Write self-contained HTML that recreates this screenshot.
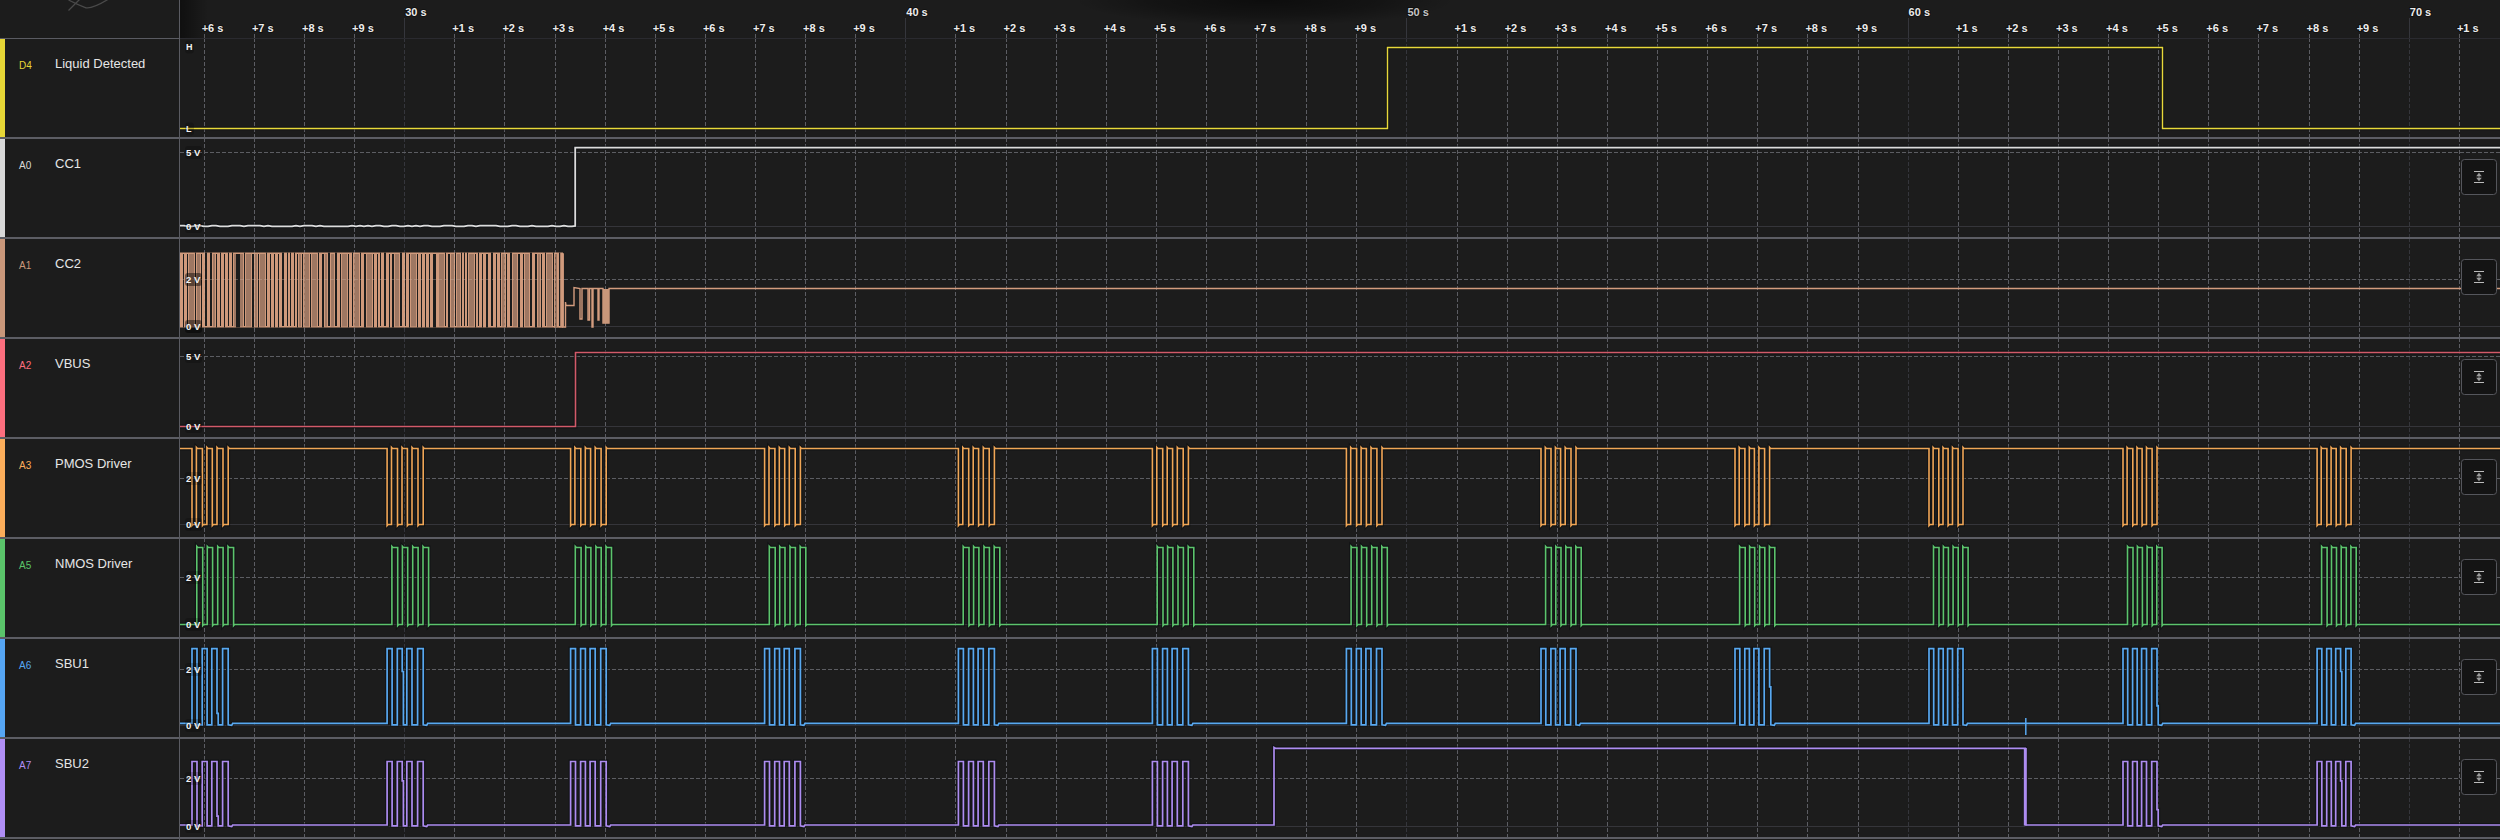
<!DOCTYPE html>
<html><head><meta charset="utf-8"><title>Logic</title>
<style>
html,body{margin:0;padding:0;background:#1c1c1c;width:2500px;height:840px;overflow:hidden}
svg{display:block}
text{font-family:"Liberation Sans",sans-serif}
</style></head><body>
<svg width="2500" height="840" viewBox="0 0 2500 840">
<defs>
<linearGradient id="lsh" x1="0" x2="1" y1="0" y2="0">
<stop offset="0" stop-color="#000" stop-opacity="0.45"/>
<stop offset="1" stop-color="#000" stop-opacity="0"/>
</linearGradient>
<radialGradient id="tsh" cx="0.5" cy="0.5" r="0.5" gradientUnits="objectBoundingBox">
<stop offset="0" stop-color="#000" stop-opacity="0.55"/>
<stop offset="0.6" stop-color="#000" stop-opacity="0.3"/>
<stop offset="1" stop-color="#000" stop-opacity="0"/>
</radialGradient>
<filter id="blur1" x="-20%" y="-20%" width="140%" height="140%"><feGaussianBlur stdDeviation="0.8"/></filter>
</defs>
<rect x="0" y="0" width="2500" height="840" fill="#1c1c1c"/>

<line x1="204.5" y1="38" x2="204.5" y2="138" stroke="#5c5d63" stroke-width="1" stroke-dasharray="4 2"/>
<line x1="204.5" y1="138" x2="204.5" y2="238" stroke="#5c5d63" stroke-width="1" stroke-dasharray="4 2"/>
<line x1="204.5" y1="238" x2="204.5" y2="338" stroke="#5c5d63" stroke-width="1" stroke-dasharray="4 2"/>
<line x1="204.5" y1="338" x2="204.5" y2="438" stroke="#5c5d63" stroke-width="1" stroke-dasharray="4 2"/>
<line x1="204.5" y1="438" x2="204.5" y2="538" stroke="#5c5d63" stroke-width="1" stroke-dasharray="4 2"/>
<line x1="204.5" y1="538" x2="204.5" y2="638" stroke="#5c5d63" stroke-width="1" stroke-dasharray="4 2"/>
<line x1="204.5" y1="638" x2="204.5" y2="738" stroke="#5c5d63" stroke-width="1" stroke-dasharray="4 2"/>
<line x1="204.5" y1="738" x2="204.5" y2="838" stroke="#5c5d63" stroke-width="1" stroke-dasharray="4 2"/>
<line x1="204.5" y1="34" x2="204.5" y2="38" stroke="#5c5d63" stroke-width="1"/>
<line x1="254.5" y1="38" x2="254.5" y2="138" stroke="#5c5d63" stroke-width="1" stroke-dasharray="4 2"/>
<line x1="254.5" y1="138" x2="254.5" y2="238" stroke="#5c5d63" stroke-width="1" stroke-dasharray="4 2"/>
<line x1="254.5" y1="238" x2="254.5" y2="338" stroke="#5c5d63" stroke-width="1" stroke-dasharray="4 2"/>
<line x1="254.5" y1="338" x2="254.5" y2="438" stroke="#5c5d63" stroke-width="1" stroke-dasharray="4 2"/>
<line x1="254.5" y1="438" x2="254.5" y2="538" stroke="#5c5d63" stroke-width="1" stroke-dasharray="4 2"/>
<line x1="254.5" y1="538" x2="254.5" y2="638" stroke="#5c5d63" stroke-width="1" stroke-dasharray="4 2"/>
<line x1="254.5" y1="638" x2="254.5" y2="738" stroke="#5c5d63" stroke-width="1" stroke-dasharray="4 2"/>
<line x1="254.5" y1="738" x2="254.5" y2="838" stroke="#5c5d63" stroke-width="1" stroke-dasharray="4 2"/>
<line x1="254.5" y1="34" x2="254.5" y2="38" stroke="#5c5d63" stroke-width="1"/>
<line x1="304.5" y1="38" x2="304.5" y2="138" stroke="#5c5d63" stroke-width="1" stroke-dasharray="4 2"/>
<line x1="304.5" y1="138" x2="304.5" y2="238" stroke="#5c5d63" stroke-width="1" stroke-dasharray="4 2"/>
<line x1="304.5" y1="238" x2="304.5" y2="338" stroke="#5c5d63" stroke-width="1" stroke-dasharray="4 2"/>
<line x1="304.5" y1="338" x2="304.5" y2="438" stroke="#5c5d63" stroke-width="1" stroke-dasharray="4 2"/>
<line x1="304.5" y1="438" x2="304.5" y2="538" stroke="#5c5d63" stroke-width="1" stroke-dasharray="4 2"/>
<line x1="304.5" y1="538" x2="304.5" y2="638" stroke="#5c5d63" stroke-width="1" stroke-dasharray="4 2"/>
<line x1="304.5" y1="638" x2="304.5" y2="738" stroke="#5c5d63" stroke-width="1" stroke-dasharray="4 2"/>
<line x1="304.5" y1="738" x2="304.5" y2="838" stroke="#5c5d63" stroke-width="1" stroke-dasharray="4 2"/>
<line x1="304.5" y1="34" x2="304.5" y2="38" stroke="#5c5d63" stroke-width="1"/>
<line x1="354.5" y1="38" x2="354.5" y2="138" stroke="#5c5d63" stroke-width="1" stroke-dasharray="4 2"/>
<line x1="354.5" y1="138" x2="354.5" y2="238" stroke="#5c5d63" stroke-width="1" stroke-dasharray="4 2"/>
<line x1="354.5" y1="238" x2="354.5" y2="338" stroke="#5c5d63" stroke-width="1" stroke-dasharray="4 2"/>
<line x1="354.5" y1="338" x2="354.5" y2="438" stroke="#5c5d63" stroke-width="1" stroke-dasharray="4 2"/>
<line x1="354.5" y1="438" x2="354.5" y2="538" stroke="#5c5d63" stroke-width="1" stroke-dasharray="4 2"/>
<line x1="354.5" y1="538" x2="354.5" y2="638" stroke="#5c5d63" stroke-width="1" stroke-dasharray="4 2"/>
<line x1="354.5" y1="638" x2="354.5" y2="738" stroke="#5c5d63" stroke-width="1" stroke-dasharray="4 2"/>
<line x1="354.5" y1="738" x2="354.5" y2="838" stroke="#5c5d63" stroke-width="1" stroke-dasharray="4 2"/>
<line x1="354.5" y1="34" x2="354.5" y2="38" stroke="#5c5d63" stroke-width="1"/>
<line x1="404.5" y1="38" x2="404.5" y2="138" stroke="#35363c" stroke-width="1" stroke-dasharray="4 2"/>
<line x1="404.5" y1="138" x2="404.5" y2="238" stroke="#35363c" stroke-width="1" stroke-dasharray="4 2"/>
<line x1="404.5" y1="238" x2="404.5" y2="338" stroke="#35363c" stroke-width="1" stroke-dasharray="4 2"/>
<line x1="404.5" y1="338" x2="404.5" y2="438" stroke="#35363c" stroke-width="1" stroke-dasharray="4 2"/>
<line x1="404.5" y1="438" x2="404.5" y2="538" stroke="#35363c" stroke-width="1" stroke-dasharray="4 2"/>
<line x1="404.5" y1="538" x2="404.5" y2="638" stroke="#35363c" stroke-width="1" stroke-dasharray="4 2"/>
<line x1="404.5" y1="638" x2="404.5" y2="738" stroke="#35363c" stroke-width="1" stroke-dasharray="4 2"/>
<line x1="404.5" y1="738" x2="404.5" y2="838" stroke="#35363c" stroke-width="1" stroke-dasharray="4 2"/>
<line x1="404.5" y1="18" x2="404.5" y2="38" stroke="#35363c" stroke-width="1"/>
<line x1="454.5" y1="38" x2="454.5" y2="138" stroke="#5c5d63" stroke-width="1" stroke-dasharray="4 2"/>
<line x1="454.5" y1="138" x2="454.5" y2="238" stroke="#5c5d63" stroke-width="1" stroke-dasharray="4 2"/>
<line x1="454.5" y1="238" x2="454.5" y2="338" stroke="#5c5d63" stroke-width="1" stroke-dasharray="4 2"/>
<line x1="454.5" y1="338" x2="454.5" y2="438" stroke="#5c5d63" stroke-width="1" stroke-dasharray="4 2"/>
<line x1="454.5" y1="438" x2="454.5" y2="538" stroke="#5c5d63" stroke-width="1" stroke-dasharray="4 2"/>
<line x1="454.5" y1="538" x2="454.5" y2="638" stroke="#5c5d63" stroke-width="1" stroke-dasharray="4 2"/>
<line x1="454.5" y1="638" x2="454.5" y2="738" stroke="#5c5d63" stroke-width="1" stroke-dasharray="4 2"/>
<line x1="454.5" y1="738" x2="454.5" y2="838" stroke="#5c5d63" stroke-width="1" stroke-dasharray="4 2"/>
<line x1="454.5" y1="34" x2="454.5" y2="38" stroke="#5c5d63" stroke-width="1"/>
<line x1="504.5" y1="38" x2="504.5" y2="138" stroke="#5c5d63" stroke-width="1" stroke-dasharray="4 2"/>
<line x1="504.5" y1="138" x2="504.5" y2="238" stroke="#5c5d63" stroke-width="1" stroke-dasharray="4 2"/>
<line x1="504.5" y1="238" x2="504.5" y2="338" stroke="#5c5d63" stroke-width="1" stroke-dasharray="4 2"/>
<line x1="504.5" y1="338" x2="504.5" y2="438" stroke="#5c5d63" stroke-width="1" stroke-dasharray="4 2"/>
<line x1="504.5" y1="438" x2="504.5" y2="538" stroke="#5c5d63" stroke-width="1" stroke-dasharray="4 2"/>
<line x1="504.5" y1="538" x2="504.5" y2="638" stroke="#5c5d63" stroke-width="1" stroke-dasharray="4 2"/>
<line x1="504.5" y1="638" x2="504.5" y2="738" stroke="#5c5d63" stroke-width="1" stroke-dasharray="4 2"/>
<line x1="504.5" y1="738" x2="504.5" y2="838" stroke="#5c5d63" stroke-width="1" stroke-dasharray="4 2"/>
<line x1="504.5" y1="34" x2="504.5" y2="38" stroke="#5c5d63" stroke-width="1"/>
<line x1="555.5" y1="38" x2="555.5" y2="138" stroke="#5c5d63" stroke-width="1" stroke-dasharray="4 2"/>
<line x1="555.5" y1="138" x2="555.5" y2="238" stroke="#5c5d63" stroke-width="1" stroke-dasharray="4 2"/>
<line x1="555.5" y1="238" x2="555.5" y2="338" stroke="#5c5d63" stroke-width="1" stroke-dasharray="4 2"/>
<line x1="555.5" y1="338" x2="555.5" y2="438" stroke="#5c5d63" stroke-width="1" stroke-dasharray="4 2"/>
<line x1="555.5" y1="438" x2="555.5" y2="538" stroke="#5c5d63" stroke-width="1" stroke-dasharray="4 2"/>
<line x1="555.5" y1="538" x2="555.5" y2="638" stroke="#5c5d63" stroke-width="1" stroke-dasharray="4 2"/>
<line x1="555.5" y1="638" x2="555.5" y2="738" stroke="#5c5d63" stroke-width="1" stroke-dasharray="4 2"/>
<line x1="555.5" y1="738" x2="555.5" y2="838" stroke="#5c5d63" stroke-width="1" stroke-dasharray="4 2"/>
<line x1="555.5" y1="34" x2="555.5" y2="38" stroke="#5c5d63" stroke-width="1"/>
<line x1="605.5" y1="38" x2="605.5" y2="138" stroke="#5c5d63" stroke-width="1" stroke-dasharray="4 2"/>
<line x1="605.5" y1="138" x2="605.5" y2="238" stroke="#5c5d63" stroke-width="1" stroke-dasharray="4 2"/>
<line x1="605.5" y1="238" x2="605.5" y2="338" stroke="#5c5d63" stroke-width="1" stroke-dasharray="4 2"/>
<line x1="605.5" y1="338" x2="605.5" y2="438" stroke="#5c5d63" stroke-width="1" stroke-dasharray="4 2"/>
<line x1="605.5" y1="438" x2="605.5" y2="538" stroke="#5c5d63" stroke-width="1" stroke-dasharray="4 2"/>
<line x1="605.5" y1="538" x2="605.5" y2="638" stroke="#5c5d63" stroke-width="1" stroke-dasharray="4 2"/>
<line x1="605.5" y1="638" x2="605.5" y2="738" stroke="#5c5d63" stroke-width="1" stroke-dasharray="4 2"/>
<line x1="605.5" y1="738" x2="605.5" y2="838" stroke="#5c5d63" stroke-width="1" stroke-dasharray="4 2"/>
<line x1="605.5" y1="34" x2="605.5" y2="38" stroke="#5c5d63" stroke-width="1"/>
<line x1="655.5" y1="38" x2="655.5" y2="138" stroke="#5c5d63" stroke-width="1" stroke-dasharray="4 2"/>
<line x1="655.5" y1="138" x2="655.5" y2="238" stroke="#5c5d63" stroke-width="1" stroke-dasharray="4 2"/>
<line x1="655.5" y1="238" x2="655.5" y2="338" stroke="#5c5d63" stroke-width="1" stroke-dasharray="4 2"/>
<line x1="655.5" y1="338" x2="655.5" y2="438" stroke="#5c5d63" stroke-width="1" stroke-dasharray="4 2"/>
<line x1="655.5" y1="438" x2="655.5" y2="538" stroke="#5c5d63" stroke-width="1" stroke-dasharray="4 2"/>
<line x1="655.5" y1="538" x2="655.5" y2="638" stroke="#5c5d63" stroke-width="1" stroke-dasharray="4 2"/>
<line x1="655.5" y1="638" x2="655.5" y2="738" stroke="#5c5d63" stroke-width="1" stroke-dasharray="4 2"/>
<line x1="655.5" y1="738" x2="655.5" y2="838" stroke="#5c5d63" stroke-width="1" stroke-dasharray="4 2"/>
<line x1="655.5" y1="34" x2="655.5" y2="38" stroke="#5c5d63" stroke-width="1"/>
<line x1="705.5" y1="38" x2="705.5" y2="138" stroke="#5c5d63" stroke-width="1" stroke-dasharray="4 2"/>
<line x1="705.5" y1="138" x2="705.5" y2="238" stroke="#5c5d63" stroke-width="1" stroke-dasharray="4 2"/>
<line x1="705.5" y1="238" x2="705.5" y2="338" stroke="#5c5d63" stroke-width="1" stroke-dasharray="4 2"/>
<line x1="705.5" y1="338" x2="705.5" y2="438" stroke="#5c5d63" stroke-width="1" stroke-dasharray="4 2"/>
<line x1="705.5" y1="438" x2="705.5" y2="538" stroke="#5c5d63" stroke-width="1" stroke-dasharray="4 2"/>
<line x1="705.5" y1="538" x2="705.5" y2="638" stroke="#5c5d63" stroke-width="1" stroke-dasharray="4 2"/>
<line x1="705.5" y1="638" x2="705.5" y2="738" stroke="#5c5d63" stroke-width="1" stroke-dasharray="4 2"/>
<line x1="705.5" y1="738" x2="705.5" y2="838" stroke="#5c5d63" stroke-width="1" stroke-dasharray="4 2"/>
<line x1="705.5" y1="34" x2="705.5" y2="38" stroke="#5c5d63" stroke-width="1"/>
<line x1="755.5" y1="38" x2="755.5" y2="138" stroke="#5c5d63" stroke-width="1" stroke-dasharray="4 2"/>
<line x1="755.5" y1="138" x2="755.5" y2="238" stroke="#5c5d63" stroke-width="1" stroke-dasharray="4 2"/>
<line x1="755.5" y1="238" x2="755.5" y2="338" stroke="#5c5d63" stroke-width="1" stroke-dasharray="4 2"/>
<line x1="755.5" y1="338" x2="755.5" y2="438" stroke="#5c5d63" stroke-width="1" stroke-dasharray="4 2"/>
<line x1="755.5" y1="438" x2="755.5" y2="538" stroke="#5c5d63" stroke-width="1" stroke-dasharray="4 2"/>
<line x1="755.5" y1="538" x2="755.5" y2="638" stroke="#5c5d63" stroke-width="1" stroke-dasharray="4 2"/>
<line x1="755.5" y1="638" x2="755.5" y2="738" stroke="#5c5d63" stroke-width="1" stroke-dasharray="4 2"/>
<line x1="755.5" y1="738" x2="755.5" y2="838" stroke="#5c5d63" stroke-width="1" stroke-dasharray="4 2"/>
<line x1="755.5" y1="34" x2="755.5" y2="38" stroke="#5c5d63" stroke-width="1"/>
<line x1="805.5" y1="38" x2="805.5" y2="138" stroke="#5c5d63" stroke-width="1" stroke-dasharray="4 2"/>
<line x1="805.5" y1="138" x2="805.5" y2="238" stroke="#5c5d63" stroke-width="1" stroke-dasharray="4 2"/>
<line x1="805.5" y1="238" x2="805.5" y2="338" stroke="#5c5d63" stroke-width="1" stroke-dasharray="4 2"/>
<line x1="805.5" y1="338" x2="805.5" y2="438" stroke="#5c5d63" stroke-width="1" stroke-dasharray="4 2"/>
<line x1="805.5" y1="438" x2="805.5" y2="538" stroke="#5c5d63" stroke-width="1" stroke-dasharray="4 2"/>
<line x1="805.5" y1="538" x2="805.5" y2="638" stroke="#5c5d63" stroke-width="1" stroke-dasharray="4 2"/>
<line x1="805.5" y1="638" x2="805.5" y2="738" stroke="#5c5d63" stroke-width="1" stroke-dasharray="4 2"/>
<line x1="805.5" y1="738" x2="805.5" y2="838" stroke="#5c5d63" stroke-width="1" stroke-dasharray="4 2"/>
<line x1="805.5" y1="34" x2="805.5" y2="38" stroke="#5c5d63" stroke-width="1"/>
<line x1="855.5" y1="38" x2="855.5" y2="138" stroke="#5c5d63" stroke-width="1" stroke-dasharray="4 2"/>
<line x1="855.5" y1="138" x2="855.5" y2="238" stroke="#5c5d63" stroke-width="1" stroke-dasharray="4 2"/>
<line x1="855.5" y1="238" x2="855.5" y2="338" stroke="#5c5d63" stroke-width="1" stroke-dasharray="4 2"/>
<line x1="855.5" y1="338" x2="855.5" y2="438" stroke="#5c5d63" stroke-width="1" stroke-dasharray="4 2"/>
<line x1="855.5" y1="438" x2="855.5" y2="538" stroke="#5c5d63" stroke-width="1" stroke-dasharray="4 2"/>
<line x1="855.5" y1="538" x2="855.5" y2="638" stroke="#5c5d63" stroke-width="1" stroke-dasharray="4 2"/>
<line x1="855.5" y1="638" x2="855.5" y2="738" stroke="#5c5d63" stroke-width="1" stroke-dasharray="4 2"/>
<line x1="855.5" y1="738" x2="855.5" y2="838" stroke="#5c5d63" stroke-width="1" stroke-dasharray="4 2"/>
<line x1="855.5" y1="34" x2="855.5" y2="38" stroke="#5c5d63" stroke-width="1"/>
<line x1="905.5" y1="38" x2="905.5" y2="138" stroke="#35363c" stroke-width="1" stroke-dasharray="4 2"/>
<line x1="905.5" y1="138" x2="905.5" y2="238" stroke="#35363c" stroke-width="1" stroke-dasharray="4 2"/>
<line x1="905.5" y1="238" x2="905.5" y2="338" stroke="#35363c" stroke-width="1" stroke-dasharray="4 2"/>
<line x1="905.5" y1="338" x2="905.5" y2="438" stroke="#35363c" stroke-width="1" stroke-dasharray="4 2"/>
<line x1="905.5" y1="438" x2="905.5" y2="538" stroke="#35363c" stroke-width="1" stroke-dasharray="4 2"/>
<line x1="905.5" y1="538" x2="905.5" y2="638" stroke="#35363c" stroke-width="1" stroke-dasharray="4 2"/>
<line x1="905.5" y1="638" x2="905.5" y2="738" stroke="#35363c" stroke-width="1" stroke-dasharray="4 2"/>
<line x1="905.5" y1="738" x2="905.5" y2="838" stroke="#35363c" stroke-width="1" stroke-dasharray="4 2"/>
<line x1="905.5" y1="18" x2="905.5" y2="38" stroke="#35363c" stroke-width="1"/>
<line x1="955.5" y1="38" x2="955.5" y2="138" stroke="#5c5d63" stroke-width="1" stroke-dasharray="4 2"/>
<line x1="955.5" y1="138" x2="955.5" y2="238" stroke="#5c5d63" stroke-width="1" stroke-dasharray="4 2"/>
<line x1="955.5" y1="238" x2="955.5" y2="338" stroke="#5c5d63" stroke-width="1" stroke-dasharray="4 2"/>
<line x1="955.5" y1="338" x2="955.5" y2="438" stroke="#5c5d63" stroke-width="1" stroke-dasharray="4 2"/>
<line x1="955.5" y1="438" x2="955.5" y2="538" stroke="#5c5d63" stroke-width="1" stroke-dasharray="4 2"/>
<line x1="955.5" y1="538" x2="955.5" y2="638" stroke="#5c5d63" stroke-width="1" stroke-dasharray="4 2"/>
<line x1="955.5" y1="638" x2="955.5" y2="738" stroke="#5c5d63" stroke-width="1" stroke-dasharray="4 2"/>
<line x1="955.5" y1="738" x2="955.5" y2="838" stroke="#5c5d63" stroke-width="1" stroke-dasharray="4 2"/>
<line x1="955.5" y1="34" x2="955.5" y2="38" stroke="#5c5d63" stroke-width="1"/>
<line x1="1006.5" y1="38" x2="1006.5" y2="138" stroke="#5c5d63" stroke-width="1" stroke-dasharray="4 2"/>
<line x1="1006.5" y1="138" x2="1006.5" y2="238" stroke="#5c5d63" stroke-width="1" stroke-dasharray="4 2"/>
<line x1="1006.5" y1="238" x2="1006.5" y2="338" stroke="#5c5d63" stroke-width="1" stroke-dasharray="4 2"/>
<line x1="1006.5" y1="338" x2="1006.5" y2="438" stroke="#5c5d63" stroke-width="1" stroke-dasharray="4 2"/>
<line x1="1006.5" y1="438" x2="1006.5" y2="538" stroke="#5c5d63" stroke-width="1" stroke-dasharray="4 2"/>
<line x1="1006.5" y1="538" x2="1006.5" y2="638" stroke="#5c5d63" stroke-width="1" stroke-dasharray="4 2"/>
<line x1="1006.5" y1="638" x2="1006.5" y2="738" stroke="#5c5d63" stroke-width="1" stroke-dasharray="4 2"/>
<line x1="1006.5" y1="738" x2="1006.5" y2="838" stroke="#5c5d63" stroke-width="1" stroke-dasharray="4 2"/>
<line x1="1006.5" y1="34" x2="1006.5" y2="38" stroke="#5c5d63" stroke-width="1"/>
<line x1="1056.5" y1="38" x2="1056.5" y2="138" stroke="#5c5d63" stroke-width="1" stroke-dasharray="4 2"/>
<line x1="1056.5" y1="138" x2="1056.5" y2="238" stroke="#5c5d63" stroke-width="1" stroke-dasharray="4 2"/>
<line x1="1056.5" y1="238" x2="1056.5" y2="338" stroke="#5c5d63" stroke-width="1" stroke-dasharray="4 2"/>
<line x1="1056.5" y1="338" x2="1056.5" y2="438" stroke="#5c5d63" stroke-width="1" stroke-dasharray="4 2"/>
<line x1="1056.5" y1="438" x2="1056.5" y2="538" stroke="#5c5d63" stroke-width="1" stroke-dasharray="4 2"/>
<line x1="1056.5" y1="538" x2="1056.5" y2="638" stroke="#5c5d63" stroke-width="1" stroke-dasharray="4 2"/>
<line x1="1056.5" y1="638" x2="1056.5" y2="738" stroke="#5c5d63" stroke-width="1" stroke-dasharray="4 2"/>
<line x1="1056.5" y1="738" x2="1056.5" y2="838" stroke="#5c5d63" stroke-width="1" stroke-dasharray="4 2"/>
<line x1="1056.5" y1="34" x2="1056.5" y2="38" stroke="#5c5d63" stroke-width="1"/>
<line x1="1106.5" y1="38" x2="1106.5" y2="138" stroke="#5c5d63" stroke-width="1" stroke-dasharray="4 2"/>
<line x1="1106.5" y1="138" x2="1106.5" y2="238" stroke="#5c5d63" stroke-width="1" stroke-dasharray="4 2"/>
<line x1="1106.5" y1="238" x2="1106.5" y2="338" stroke="#5c5d63" stroke-width="1" stroke-dasharray="4 2"/>
<line x1="1106.5" y1="338" x2="1106.5" y2="438" stroke="#5c5d63" stroke-width="1" stroke-dasharray="4 2"/>
<line x1="1106.5" y1="438" x2="1106.5" y2="538" stroke="#5c5d63" stroke-width="1" stroke-dasharray="4 2"/>
<line x1="1106.5" y1="538" x2="1106.5" y2="638" stroke="#5c5d63" stroke-width="1" stroke-dasharray="4 2"/>
<line x1="1106.5" y1="638" x2="1106.5" y2="738" stroke="#5c5d63" stroke-width="1" stroke-dasharray="4 2"/>
<line x1="1106.5" y1="738" x2="1106.5" y2="838" stroke="#5c5d63" stroke-width="1" stroke-dasharray="4 2"/>
<line x1="1106.5" y1="34" x2="1106.5" y2="38" stroke="#5c5d63" stroke-width="1"/>
<line x1="1156.5" y1="38" x2="1156.5" y2="138" stroke="#5c5d63" stroke-width="1" stroke-dasharray="4 2"/>
<line x1="1156.5" y1="138" x2="1156.5" y2="238" stroke="#5c5d63" stroke-width="1" stroke-dasharray="4 2"/>
<line x1="1156.5" y1="238" x2="1156.5" y2="338" stroke="#5c5d63" stroke-width="1" stroke-dasharray="4 2"/>
<line x1="1156.5" y1="338" x2="1156.5" y2="438" stroke="#5c5d63" stroke-width="1" stroke-dasharray="4 2"/>
<line x1="1156.5" y1="438" x2="1156.5" y2="538" stroke="#5c5d63" stroke-width="1" stroke-dasharray="4 2"/>
<line x1="1156.5" y1="538" x2="1156.5" y2="638" stroke="#5c5d63" stroke-width="1" stroke-dasharray="4 2"/>
<line x1="1156.5" y1="638" x2="1156.5" y2="738" stroke="#5c5d63" stroke-width="1" stroke-dasharray="4 2"/>
<line x1="1156.5" y1="738" x2="1156.5" y2="838" stroke="#5c5d63" stroke-width="1" stroke-dasharray="4 2"/>
<line x1="1156.5" y1="34" x2="1156.5" y2="38" stroke="#5c5d63" stroke-width="1"/>
<line x1="1206.5" y1="38" x2="1206.5" y2="138" stroke="#5c5d63" stroke-width="1" stroke-dasharray="4 2"/>
<line x1="1206.5" y1="138" x2="1206.5" y2="238" stroke="#5c5d63" stroke-width="1" stroke-dasharray="4 2"/>
<line x1="1206.5" y1="238" x2="1206.5" y2="338" stroke="#5c5d63" stroke-width="1" stroke-dasharray="4 2"/>
<line x1="1206.5" y1="338" x2="1206.5" y2="438" stroke="#5c5d63" stroke-width="1" stroke-dasharray="4 2"/>
<line x1="1206.5" y1="438" x2="1206.5" y2="538" stroke="#5c5d63" stroke-width="1" stroke-dasharray="4 2"/>
<line x1="1206.5" y1="538" x2="1206.5" y2="638" stroke="#5c5d63" stroke-width="1" stroke-dasharray="4 2"/>
<line x1="1206.5" y1="638" x2="1206.5" y2="738" stroke="#5c5d63" stroke-width="1" stroke-dasharray="4 2"/>
<line x1="1206.5" y1="738" x2="1206.5" y2="838" stroke="#5c5d63" stroke-width="1" stroke-dasharray="4 2"/>
<line x1="1206.5" y1="34" x2="1206.5" y2="38" stroke="#5c5d63" stroke-width="1"/>
<line x1="1256.5" y1="38" x2="1256.5" y2="138" stroke="#5c5d63" stroke-width="1" stroke-dasharray="4 2"/>
<line x1="1256.5" y1="138" x2="1256.5" y2="238" stroke="#5c5d63" stroke-width="1" stroke-dasharray="4 2"/>
<line x1="1256.5" y1="238" x2="1256.5" y2="338" stroke="#5c5d63" stroke-width="1" stroke-dasharray="4 2"/>
<line x1="1256.5" y1="338" x2="1256.5" y2="438" stroke="#5c5d63" stroke-width="1" stroke-dasharray="4 2"/>
<line x1="1256.5" y1="438" x2="1256.5" y2="538" stroke="#5c5d63" stroke-width="1" stroke-dasharray="4 2"/>
<line x1="1256.5" y1="538" x2="1256.5" y2="638" stroke="#5c5d63" stroke-width="1" stroke-dasharray="4 2"/>
<line x1="1256.5" y1="638" x2="1256.5" y2="738" stroke="#5c5d63" stroke-width="1" stroke-dasharray="4 2"/>
<line x1="1256.5" y1="738" x2="1256.5" y2="838" stroke="#5c5d63" stroke-width="1" stroke-dasharray="4 2"/>
<line x1="1256.5" y1="34" x2="1256.5" y2="38" stroke="#5c5d63" stroke-width="1"/>
<line x1="1306.5" y1="38" x2="1306.5" y2="138" stroke="#5c5d63" stroke-width="1" stroke-dasharray="4 2"/>
<line x1="1306.5" y1="138" x2="1306.5" y2="238" stroke="#5c5d63" stroke-width="1" stroke-dasharray="4 2"/>
<line x1="1306.5" y1="238" x2="1306.5" y2="338" stroke="#5c5d63" stroke-width="1" stroke-dasharray="4 2"/>
<line x1="1306.5" y1="338" x2="1306.5" y2="438" stroke="#5c5d63" stroke-width="1" stroke-dasharray="4 2"/>
<line x1="1306.5" y1="438" x2="1306.5" y2="538" stroke="#5c5d63" stroke-width="1" stroke-dasharray="4 2"/>
<line x1="1306.5" y1="538" x2="1306.5" y2="638" stroke="#5c5d63" stroke-width="1" stroke-dasharray="4 2"/>
<line x1="1306.5" y1="638" x2="1306.5" y2="738" stroke="#5c5d63" stroke-width="1" stroke-dasharray="4 2"/>
<line x1="1306.5" y1="738" x2="1306.5" y2="838" stroke="#5c5d63" stroke-width="1" stroke-dasharray="4 2"/>
<line x1="1306.5" y1="34" x2="1306.5" y2="38" stroke="#5c5d63" stroke-width="1"/>
<line x1="1356.5" y1="38" x2="1356.5" y2="138" stroke="#5c5d63" stroke-width="1" stroke-dasharray="4 2"/>
<line x1="1356.5" y1="138" x2="1356.5" y2="238" stroke="#5c5d63" stroke-width="1" stroke-dasharray="4 2"/>
<line x1="1356.5" y1="238" x2="1356.5" y2="338" stroke="#5c5d63" stroke-width="1" stroke-dasharray="4 2"/>
<line x1="1356.5" y1="338" x2="1356.5" y2="438" stroke="#5c5d63" stroke-width="1" stroke-dasharray="4 2"/>
<line x1="1356.5" y1="438" x2="1356.5" y2="538" stroke="#5c5d63" stroke-width="1" stroke-dasharray="4 2"/>
<line x1="1356.5" y1="538" x2="1356.5" y2="638" stroke="#5c5d63" stroke-width="1" stroke-dasharray="4 2"/>
<line x1="1356.5" y1="638" x2="1356.5" y2="738" stroke="#5c5d63" stroke-width="1" stroke-dasharray="4 2"/>
<line x1="1356.5" y1="738" x2="1356.5" y2="838" stroke="#5c5d63" stroke-width="1" stroke-dasharray="4 2"/>
<line x1="1356.5" y1="34" x2="1356.5" y2="38" stroke="#5c5d63" stroke-width="1"/>
<line x1="1406.5" y1="38" x2="1406.5" y2="138" stroke="#35363c" stroke-width="1" stroke-dasharray="4 2"/>
<line x1="1406.5" y1="138" x2="1406.5" y2="238" stroke="#35363c" stroke-width="1" stroke-dasharray="4 2"/>
<line x1="1406.5" y1="238" x2="1406.5" y2="338" stroke="#35363c" stroke-width="1" stroke-dasharray="4 2"/>
<line x1="1406.5" y1="338" x2="1406.5" y2="438" stroke="#35363c" stroke-width="1" stroke-dasharray="4 2"/>
<line x1="1406.5" y1="438" x2="1406.5" y2="538" stroke="#35363c" stroke-width="1" stroke-dasharray="4 2"/>
<line x1="1406.5" y1="538" x2="1406.5" y2="638" stroke="#35363c" stroke-width="1" stroke-dasharray="4 2"/>
<line x1="1406.5" y1="638" x2="1406.5" y2="738" stroke="#35363c" stroke-width="1" stroke-dasharray="4 2"/>
<line x1="1406.5" y1="738" x2="1406.5" y2="838" stroke="#35363c" stroke-width="1" stroke-dasharray="4 2"/>
<line x1="1406.5" y1="18" x2="1406.5" y2="38" stroke="#35363c" stroke-width="1"/>
<line x1="1457.5" y1="38" x2="1457.5" y2="138" stroke="#5c5d63" stroke-width="1" stroke-dasharray="4 2"/>
<line x1="1457.5" y1="138" x2="1457.5" y2="238" stroke="#5c5d63" stroke-width="1" stroke-dasharray="4 2"/>
<line x1="1457.5" y1="238" x2="1457.5" y2="338" stroke="#5c5d63" stroke-width="1" stroke-dasharray="4 2"/>
<line x1="1457.5" y1="338" x2="1457.5" y2="438" stroke="#5c5d63" stroke-width="1" stroke-dasharray="4 2"/>
<line x1="1457.5" y1="438" x2="1457.5" y2="538" stroke="#5c5d63" stroke-width="1" stroke-dasharray="4 2"/>
<line x1="1457.5" y1="538" x2="1457.5" y2="638" stroke="#5c5d63" stroke-width="1" stroke-dasharray="4 2"/>
<line x1="1457.5" y1="638" x2="1457.5" y2="738" stroke="#5c5d63" stroke-width="1" stroke-dasharray="4 2"/>
<line x1="1457.5" y1="738" x2="1457.5" y2="838" stroke="#5c5d63" stroke-width="1" stroke-dasharray="4 2"/>
<line x1="1457.5" y1="34" x2="1457.5" y2="38" stroke="#5c5d63" stroke-width="1"/>
<line x1="1507.5" y1="38" x2="1507.5" y2="138" stroke="#5c5d63" stroke-width="1" stroke-dasharray="4 2"/>
<line x1="1507.5" y1="138" x2="1507.5" y2="238" stroke="#5c5d63" stroke-width="1" stroke-dasharray="4 2"/>
<line x1="1507.5" y1="238" x2="1507.5" y2="338" stroke="#5c5d63" stroke-width="1" stroke-dasharray="4 2"/>
<line x1="1507.5" y1="338" x2="1507.5" y2="438" stroke="#5c5d63" stroke-width="1" stroke-dasharray="4 2"/>
<line x1="1507.5" y1="438" x2="1507.5" y2="538" stroke="#5c5d63" stroke-width="1" stroke-dasharray="4 2"/>
<line x1="1507.5" y1="538" x2="1507.5" y2="638" stroke="#5c5d63" stroke-width="1" stroke-dasharray="4 2"/>
<line x1="1507.5" y1="638" x2="1507.5" y2="738" stroke="#5c5d63" stroke-width="1" stroke-dasharray="4 2"/>
<line x1="1507.5" y1="738" x2="1507.5" y2="838" stroke="#5c5d63" stroke-width="1" stroke-dasharray="4 2"/>
<line x1="1507.5" y1="34" x2="1507.5" y2="38" stroke="#5c5d63" stroke-width="1"/>
<line x1="1557.5" y1="38" x2="1557.5" y2="138" stroke="#5c5d63" stroke-width="1" stroke-dasharray="4 2"/>
<line x1="1557.5" y1="138" x2="1557.5" y2="238" stroke="#5c5d63" stroke-width="1" stroke-dasharray="4 2"/>
<line x1="1557.5" y1="238" x2="1557.5" y2="338" stroke="#5c5d63" stroke-width="1" stroke-dasharray="4 2"/>
<line x1="1557.5" y1="338" x2="1557.5" y2="438" stroke="#5c5d63" stroke-width="1" stroke-dasharray="4 2"/>
<line x1="1557.5" y1="438" x2="1557.5" y2="538" stroke="#5c5d63" stroke-width="1" stroke-dasharray="4 2"/>
<line x1="1557.5" y1="538" x2="1557.5" y2="638" stroke="#5c5d63" stroke-width="1" stroke-dasharray="4 2"/>
<line x1="1557.5" y1="638" x2="1557.5" y2="738" stroke="#5c5d63" stroke-width="1" stroke-dasharray="4 2"/>
<line x1="1557.5" y1="738" x2="1557.5" y2="838" stroke="#5c5d63" stroke-width="1" stroke-dasharray="4 2"/>
<line x1="1557.5" y1="34" x2="1557.5" y2="38" stroke="#5c5d63" stroke-width="1"/>
<line x1="1607.5" y1="38" x2="1607.5" y2="138" stroke="#5c5d63" stroke-width="1" stroke-dasharray="4 2"/>
<line x1="1607.5" y1="138" x2="1607.5" y2="238" stroke="#5c5d63" stroke-width="1" stroke-dasharray="4 2"/>
<line x1="1607.5" y1="238" x2="1607.5" y2="338" stroke="#5c5d63" stroke-width="1" stroke-dasharray="4 2"/>
<line x1="1607.5" y1="338" x2="1607.5" y2="438" stroke="#5c5d63" stroke-width="1" stroke-dasharray="4 2"/>
<line x1="1607.5" y1="438" x2="1607.5" y2="538" stroke="#5c5d63" stroke-width="1" stroke-dasharray="4 2"/>
<line x1="1607.5" y1="538" x2="1607.5" y2="638" stroke="#5c5d63" stroke-width="1" stroke-dasharray="4 2"/>
<line x1="1607.5" y1="638" x2="1607.5" y2="738" stroke="#5c5d63" stroke-width="1" stroke-dasharray="4 2"/>
<line x1="1607.5" y1="738" x2="1607.5" y2="838" stroke="#5c5d63" stroke-width="1" stroke-dasharray="4 2"/>
<line x1="1607.5" y1="34" x2="1607.5" y2="38" stroke="#5c5d63" stroke-width="1"/>
<line x1="1657.5" y1="38" x2="1657.5" y2="138" stroke="#5c5d63" stroke-width="1" stroke-dasharray="4 2"/>
<line x1="1657.5" y1="138" x2="1657.5" y2="238" stroke="#5c5d63" stroke-width="1" stroke-dasharray="4 2"/>
<line x1="1657.5" y1="238" x2="1657.5" y2="338" stroke="#5c5d63" stroke-width="1" stroke-dasharray="4 2"/>
<line x1="1657.5" y1="338" x2="1657.5" y2="438" stroke="#5c5d63" stroke-width="1" stroke-dasharray="4 2"/>
<line x1="1657.5" y1="438" x2="1657.5" y2="538" stroke="#5c5d63" stroke-width="1" stroke-dasharray="4 2"/>
<line x1="1657.5" y1="538" x2="1657.5" y2="638" stroke="#5c5d63" stroke-width="1" stroke-dasharray="4 2"/>
<line x1="1657.5" y1="638" x2="1657.5" y2="738" stroke="#5c5d63" stroke-width="1" stroke-dasharray="4 2"/>
<line x1="1657.5" y1="738" x2="1657.5" y2="838" stroke="#5c5d63" stroke-width="1" stroke-dasharray="4 2"/>
<line x1="1657.5" y1="34" x2="1657.5" y2="38" stroke="#5c5d63" stroke-width="1"/>
<line x1="1707.5" y1="38" x2="1707.5" y2="138" stroke="#5c5d63" stroke-width="1" stroke-dasharray="4 2"/>
<line x1="1707.5" y1="138" x2="1707.5" y2="238" stroke="#5c5d63" stroke-width="1" stroke-dasharray="4 2"/>
<line x1="1707.5" y1="238" x2="1707.5" y2="338" stroke="#5c5d63" stroke-width="1" stroke-dasharray="4 2"/>
<line x1="1707.5" y1="338" x2="1707.5" y2="438" stroke="#5c5d63" stroke-width="1" stroke-dasharray="4 2"/>
<line x1="1707.5" y1="438" x2="1707.5" y2="538" stroke="#5c5d63" stroke-width="1" stroke-dasharray="4 2"/>
<line x1="1707.5" y1="538" x2="1707.5" y2="638" stroke="#5c5d63" stroke-width="1" stroke-dasharray="4 2"/>
<line x1="1707.5" y1="638" x2="1707.5" y2="738" stroke="#5c5d63" stroke-width="1" stroke-dasharray="4 2"/>
<line x1="1707.5" y1="738" x2="1707.5" y2="838" stroke="#5c5d63" stroke-width="1" stroke-dasharray="4 2"/>
<line x1="1707.5" y1="34" x2="1707.5" y2="38" stroke="#5c5d63" stroke-width="1"/>
<line x1="1757.5" y1="38" x2="1757.5" y2="138" stroke="#5c5d63" stroke-width="1" stroke-dasharray="4 2"/>
<line x1="1757.5" y1="138" x2="1757.5" y2="238" stroke="#5c5d63" stroke-width="1" stroke-dasharray="4 2"/>
<line x1="1757.5" y1="238" x2="1757.5" y2="338" stroke="#5c5d63" stroke-width="1" stroke-dasharray="4 2"/>
<line x1="1757.5" y1="338" x2="1757.5" y2="438" stroke="#5c5d63" stroke-width="1" stroke-dasharray="4 2"/>
<line x1="1757.5" y1="438" x2="1757.5" y2="538" stroke="#5c5d63" stroke-width="1" stroke-dasharray="4 2"/>
<line x1="1757.5" y1="538" x2="1757.5" y2="638" stroke="#5c5d63" stroke-width="1" stroke-dasharray="4 2"/>
<line x1="1757.5" y1="638" x2="1757.5" y2="738" stroke="#5c5d63" stroke-width="1" stroke-dasharray="4 2"/>
<line x1="1757.5" y1="738" x2="1757.5" y2="838" stroke="#5c5d63" stroke-width="1" stroke-dasharray="4 2"/>
<line x1="1757.5" y1="34" x2="1757.5" y2="38" stroke="#5c5d63" stroke-width="1"/>
<line x1="1807.5" y1="38" x2="1807.5" y2="138" stroke="#5c5d63" stroke-width="1" stroke-dasharray="4 2"/>
<line x1="1807.5" y1="138" x2="1807.5" y2="238" stroke="#5c5d63" stroke-width="1" stroke-dasharray="4 2"/>
<line x1="1807.5" y1="238" x2="1807.5" y2="338" stroke="#5c5d63" stroke-width="1" stroke-dasharray="4 2"/>
<line x1="1807.5" y1="338" x2="1807.5" y2="438" stroke="#5c5d63" stroke-width="1" stroke-dasharray="4 2"/>
<line x1="1807.5" y1="438" x2="1807.5" y2="538" stroke="#5c5d63" stroke-width="1" stroke-dasharray="4 2"/>
<line x1="1807.5" y1="538" x2="1807.5" y2="638" stroke="#5c5d63" stroke-width="1" stroke-dasharray="4 2"/>
<line x1="1807.5" y1="638" x2="1807.5" y2="738" stroke="#5c5d63" stroke-width="1" stroke-dasharray="4 2"/>
<line x1="1807.5" y1="738" x2="1807.5" y2="838" stroke="#5c5d63" stroke-width="1" stroke-dasharray="4 2"/>
<line x1="1807.5" y1="34" x2="1807.5" y2="38" stroke="#5c5d63" stroke-width="1"/>
<line x1="1858.5" y1="38" x2="1858.5" y2="138" stroke="#5c5d63" stroke-width="1" stroke-dasharray="4 2"/>
<line x1="1858.5" y1="138" x2="1858.5" y2="238" stroke="#5c5d63" stroke-width="1" stroke-dasharray="4 2"/>
<line x1="1858.5" y1="238" x2="1858.5" y2="338" stroke="#5c5d63" stroke-width="1" stroke-dasharray="4 2"/>
<line x1="1858.5" y1="338" x2="1858.5" y2="438" stroke="#5c5d63" stroke-width="1" stroke-dasharray="4 2"/>
<line x1="1858.5" y1="438" x2="1858.5" y2="538" stroke="#5c5d63" stroke-width="1" stroke-dasharray="4 2"/>
<line x1="1858.5" y1="538" x2="1858.5" y2="638" stroke="#5c5d63" stroke-width="1" stroke-dasharray="4 2"/>
<line x1="1858.5" y1="638" x2="1858.5" y2="738" stroke="#5c5d63" stroke-width="1" stroke-dasharray="4 2"/>
<line x1="1858.5" y1="738" x2="1858.5" y2="838" stroke="#5c5d63" stroke-width="1" stroke-dasharray="4 2"/>
<line x1="1858.5" y1="34" x2="1858.5" y2="38" stroke="#5c5d63" stroke-width="1"/>
<line x1="1908.5" y1="38" x2="1908.5" y2="138" stroke="#35363c" stroke-width="1" stroke-dasharray="4 2"/>
<line x1="1908.5" y1="138" x2="1908.5" y2="238" stroke="#35363c" stroke-width="1" stroke-dasharray="4 2"/>
<line x1="1908.5" y1="238" x2="1908.5" y2="338" stroke="#35363c" stroke-width="1" stroke-dasharray="4 2"/>
<line x1="1908.5" y1="338" x2="1908.5" y2="438" stroke="#35363c" stroke-width="1" stroke-dasharray="4 2"/>
<line x1="1908.5" y1="438" x2="1908.5" y2="538" stroke="#35363c" stroke-width="1" stroke-dasharray="4 2"/>
<line x1="1908.5" y1="538" x2="1908.5" y2="638" stroke="#35363c" stroke-width="1" stroke-dasharray="4 2"/>
<line x1="1908.5" y1="638" x2="1908.5" y2="738" stroke="#35363c" stroke-width="1" stroke-dasharray="4 2"/>
<line x1="1908.5" y1="738" x2="1908.5" y2="838" stroke="#35363c" stroke-width="1" stroke-dasharray="4 2"/>
<line x1="1908.5" y1="18" x2="1908.5" y2="38" stroke="#35363c" stroke-width="1"/>
<line x1="1958.5" y1="38" x2="1958.5" y2="138" stroke="#5c5d63" stroke-width="1" stroke-dasharray="4 2"/>
<line x1="1958.5" y1="138" x2="1958.5" y2="238" stroke="#5c5d63" stroke-width="1" stroke-dasharray="4 2"/>
<line x1="1958.5" y1="238" x2="1958.5" y2="338" stroke="#5c5d63" stroke-width="1" stroke-dasharray="4 2"/>
<line x1="1958.5" y1="338" x2="1958.5" y2="438" stroke="#5c5d63" stroke-width="1" stroke-dasharray="4 2"/>
<line x1="1958.5" y1="438" x2="1958.5" y2="538" stroke="#5c5d63" stroke-width="1" stroke-dasharray="4 2"/>
<line x1="1958.5" y1="538" x2="1958.5" y2="638" stroke="#5c5d63" stroke-width="1" stroke-dasharray="4 2"/>
<line x1="1958.5" y1="638" x2="1958.5" y2="738" stroke="#5c5d63" stroke-width="1" stroke-dasharray="4 2"/>
<line x1="1958.5" y1="738" x2="1958.5" y2="838" stroke="#5c5d63" stroke-width="1" stroke-dasharray="4 2"/>
<line x1="1958.5" y1="34" x2="1958.5" y2="38" stroke="#5c5d63" stroke-width="1"/>
<line x1="2008.5" y1="38" x2="2008.5" y2="138" stroke="#5c5d63" stroke-width="1" stroke-dasharray="4 2"/>
<line x1="2008.5" y1="138" x2="2008.5" y2="238" stroke="#5c5d63" stroke-width="1" stroke-dasharray="4 2"/>
<line x1="2008.5" y1="238" x2="2008.5" y2="338" stroke="#5c5d63" stroke-width="1" stroke-dasharray="4 2"/>
<line x1="2008.5" y1="338" x2="2008.5" y2="438" stroke="#5c5d63" stroke-width="1" stroke-dasharray="4 2"/>
<line x1="2008.5" y1="438" x2="2008.5" y2="538" stroke="#5c5d63" stroke-width="1" stroke-dasharray="4 2"/>
<line x1="2008.5" y1="538" x2="2008.5" y2="638" stroke="#5c5d63" stroke-width="1" stroke-dasharray="4 2"/>
<line x1="2008.5" y1="638" x2="2008.5" y2="738" stroke="#5c5d63" stroke-width="1" stroke-dasharray="4 2"/>
<line x1="2008.5" y1="738" x2="2008.5" y2="838" stroke="#5c5d63" stroke-width="1" stroke-dasharray="4 2"/>
<line x1="2008.5" y1="34" x2="2008.5" y2="38" stroke="#5c5d63" stroke-width="1"/>
<line x1="2058.5" y1="38" x2="2058.5" y2="138" stroke="#5c5d63" stroke-width="1" stroke-dasharray="4 2"/>
<line x1="2058.5" y1="138" x2="2058.5" y2="238" stroke="#5c5d63" stroke-width="1" stroke-dasharray="4 2"/>
<line x1="2058.5" y1="238" x2="2058.5" y2="338" stroke="#5c5d63" stroke-width="1" stroke-dasharray="4 2"/>
<line x1="2058.5" y1="338" x2="2058.5" y2="438" stroke="#5c5d63" stroke-width="1" stroke-dasharray="4 2"/>
<line x1="2058.5" y1="438" x2="2058.5" y2="538" stroke="#5c5d63" stroke-width="1" stroke-dasharray="4 2"/>
<line x1="2058.5" y1="538" x2="2058.5" y2="638" stroke="#5c5d63" stroke-width="1" stroke-dasharray="4 2"/>
<line x1="2058.5" y1="638" x2="2058.5" y2="738" stroke="#5c5d63" stroke-width="1" stroke-dasharray="4 2"/>
<line x1="2058.5" y1="738" x2="2058.5" y2="838" stroke="#5c5d63" stroke-width="1" stroke-dasharray="4 2"/>
<line x1="2058.5" y1="34" x2="2058.5" y2="38" stroke="#5c5d63" stroke-width="1"/>
<line x1="2108.5" y1="38" x2="2108.5" y2="138" stroke="#5c5d63" stroke-width="1" stroke-dasharray="4 2"/>
<line x1="2108.5" y1="138" x2="2108.5" y2="238" stroke="#5c5d63" stroke-width="1" stroke-dasharray="4 2"/>
<line x1="2108.5" y1="238" x2="2108.5" y2="338" stroke="#5c5d63" stroke-width="1" stroke-dasharray="4 2"/>
<line x1="2108.5" y1="338" x2="2108.5" y2="438" stroke="#5c5d63" stroke-width="1" stroke-dasharray="4 2"/>
<line x1="2108.5" y1="438" x2="2108.5" y2="538" stroke="#5c5d63" stroke-width="1" stroke-dasharray="4 2"/>
<line x1="2108.5" y1="538" x2="2108.5" y2="638" stroke="#5c5d63" stroke-width="1" stroke-dasharray="4 2"/>
<line x1="2108.5" y1="638" x2="2108.5" y2="738" stroke="#5c5d63" stroke-width="1" stroke-dasharray="4 2"/>
<line x1="2108.5" y1="738" x2="2108.5" y2="838" stroke="#5c5d63" stroke-width="1" stroke-dasharray="4 2"/>
<line x1="2108.5" y1="34" x2="2108.5" y2="38" stroke="#5c5d63" stroke-width="1"/>
<line x1="2158.5" y1="38" x2="2158.5" y2="138" stroke="#5c5d63" stroke-width="1" stroke-dasharray="4 2"/>
<line x1="2158.5" y1="138" x2="2158.5" y2="238" stroke="#5c5d63" stroke-width="1" stroke-dasharray="4 2"/>
<line x1="2158.5" y1="238" x2="2158.5" y2="338" stroke="#5c5d63" stroke-width="1" stroke-dasharray="4 2"/>
<line x1="2158.5" y1="338" x2="2158.5" y2="438" stroke="#5c5d63" stroke-width="1" stroke-dasharray="4 2"/>
<line x1="2158.5" y1="438" x2="2158.5" y2="538" stroke="#5c5d63" stroke-width="1" stroke-dasharray="4 2"/>
<line x1="2158.5" y1="538" x2="2158.5" y2="638" stroke="#5c5d63" stroke-width="1" stroke-dasharray="4 2"/>
<line x1="2158.5" y1="638" x2="2158.5" y2="738" stroke="#5c5d63" stroke-width="1" stroke-dasharray="4 2"/>
<line x1="2158.5" y1="738" x2="2158.5" y2="838" stroke="#5c5d63" stroke-width="1" stroke-dasharray="4 2"/>
<line x1="2158.5" y1="34" x2="2158.5" y2="38" stroke="#5c5d63" stroke-width="1"/>
<line x1="2208.5" y1="38" x2="2208.5" y2="138" stroke="#5c5d63" stroke-width="1" stroke-dasharray="4 2"/>
<line x1="2208.5" y1="138" x2="2208.5" y2="238" stroke="#5c5d63" stroke-width="1" stroke-dasharray="4 2"/>
<line x1="2208.5" y1="238" x2="2208.5" y2="338" stroke="#5c5d63" stroke-width="1" stroke-dasharray="4 2"/>
<line x1="2208.5" y1="338" x2="2208.5" y2="438" stroke="#5c5d63" stroke-width="1" stroke-dasharray="4 2"/>
<line x1="2208.5" y1="438" x2="2208.5" y2="538" stroke="#5c5d63" stroke-width="1" stroke-dasharray="4 2"/>
<line x1="2208.5" y1="538" x2="2208.5" y2="638" stroke="#5c5d63" stroke-width="1" stroke-dasharray="4 2"/>
<line x1="2208.5" y1="638" x2="2208.5" y2="738" stroke="#5c5d63" stroke-width="1" stroke-dasharray="4 2"/>
<line x1="2208.5" y1="738" x2="2208.5" y2="838" stroke="#5c5d63" stroke-width="1" stroke-dasharray="4 2"/>
<line x1="2208.5" y1="34" x2="2208.5" y2="38" stroke="#5c5d63" stroke-width="1"/>
<line x1="2258.5" y1="38" x2="2258.5" y2="138" stroke="#5c5d63" stroke-width="1" stroke-dasharray="4 2"/>
<line x1="2258.5" y1="138" x2="2258.5" y2="238" stroke="#5c5d63" stroke-width="1" stroke-dasharray="4 2"/>
<line x1="2258.5" y1="238" x2="2258.5" y2="338" stroke="#5c5d63" stroke-width="1" stroke-dasharray="4 2"/>
<line x1="2258.5" y1="338" x2="2258.5" y2="438" stroke="#5c5d63" stroke-width="1" stroke-dasharray="4 2"/>
<line x1="2258.5" y1="438" x2="2258.5" y2="538" stroke="#5c5d63" stroke-width="1" stroke-dasharray="4 2"/>
<line x1="2258.5" y1="538" x2="2258.5" y2="638" stroke="#5c5d63" stroke-width="1" stroke-dasharray="4 2"/>
<line x1="2258.5" y1="638" x2="2258.5" y2="738" stroke="#5c5d63" stroke-width="1" stroke-dasharray="4 2"/>
<line x1="2258.5" y1="738" x2="2258.5" y2="838" stroke="#5c5d63" stroke-width="1" stroke-dasharray="4 2"/>
<line x1="2258.5" y1="34" x2="2258.5" y2="38" stroke="#5c5d63" stroke-width="1"/>
<line x1="2309.5" y1="38" x2="2309.5" y2="138" stroke="#5c5d63" stroke-width="1" stroke-dasharray="4 2"/>
<line x1="2309.5" y1="138" x2="2309.5" y2="238" stroke="#5c5d63" stroke-width="1" stroke-dasharray="4 2"/>
<line x1="2309.5" y1="238" x2="2309.5" y2="338" stroke="#5c5d63" stroke-width="1" stroke-dasharray="4 2"/>
<line x1="2309.5" y1="338" x2="2309.5" y2="438" stroke="#5c5d63" stroke-width="1" stroke-dasharray="4 2"/>
<line x1="2309.5" y1="438" x2="2309.5" y2="538" stroke="#5c5d63" stroke-width="1" stroke-dasharray="4 2"/>
<line x1="2309.5" y1="538" x2="2309.5" y2="638" stroke="#5c5d63" stroke-width="1" stroke-dasharray="4 2"/>
<line x1="2309.5" y1="638" x2="2309.5" y2="738" stroke="#5c5d63" stroke-width="1" stroke-dasharray="4 2"/>
<line x1="2309.5" y1="738" x2="2309.5" y2="838" stroke="#5c5d63" stroke-width="1" stroke-dasharray="4 2"/>
<line x1="2309.5" y1="34" x2="2309.5" y2="38" stroke="#5c5d63" stroke-width="1"/>
<line x1="2359.5" y1="38" x2="2359.5" y2="138" stroke="#5c5d63" stroke-width="1" stroke-dasharray="4 2"/>
<line x1="2359.5" y1="138" x2="2359.5" y2="238" stroke="#5c5d63" stroke-width="1" stroke-dasharray="4 2"/>
<line x1="2359.5" y1="238" x2="2359.5" y2="338" stroke="#5c5d63" stroke-width="1" stroke-dasharray="4 2"/>
<line x1="2359.5" y1="338" x2="2359.5" y2="438" stroke="#5c5d63" stroke-width="1" stroke-dasharray="4 2"/>
<line x1="2359.5" y1="438" x2="2359.5" y2="538" stroke="#5c5d63" stroke-width="1" stroke-dasharray="4 2"/>
<line x1="2359.5" y1="538" x2="2359.5" y2="638" stroke="#5c5d63" stroke-width="1" stroke-dasharray="4 2"/>
<line x1="2359.5" y1="638" x2="2359.5" y2="738" stroke="#5c5d63" stroke-width="1" stroke-dasharray="4 2"/>
<line x1="2359.5" y1="738" x2="2359.5" y2="838" stroke="#5c5d63" stroke-width="1" stroke-dasharray="4 2"/>
<line x1="2359.5" y1="34" x2="2359.5" y2="38" stroke="#5c5d63" stroke-width="1"/>
<line x1="2409.5" y1="38" x2="2409.5" y2="138" stroke="#35363c" stroke-width="1" stroke-dasharray="4 2"/>
<line x1="2409.5" y1="138" x2="2409.5" y2="238" stroke="#35363c" stroke-width="1" stroke-dasharray="4 2"/>
<line x1="2409.5" y1="238" x2="2409.5" y2="338" stroke="#35363c" stroke-width="1" stroke-dasharray="4 2"/>
<line x1="2409.5" y1="338" x2="2409.5" y2="438" stroke="#35363c" stroke-width="1" stroke-dasharray="4 2"/>
<line x1="2409.5" y1="438" x2="2409.5" y2="538" stroke="#35363c" stroke-width="1" stroke-dasharray="4 2"/>
<line x1="2409.5" y1="538" x2="2409.5" y2="638" stroke="#35363c" stroke-width="1" stroke-dasharray="4 2"/>
<line x1="2409.5" y1="638" x2="2409.5" y2="738" stroke="#35363c" stroke-width="1" stroke-dasharray="4 2"/>
<line x1="2409.5" y1="738" x2="2409.5" y2="838" stroke="#35363c" stroke-width="1" stroke-dasharray="4 2"/>
<line x1="2409.5" y1="18" x2="2409.5" y2="38" stroke="#35363c" stroke-width="1"/>
<line x1="2459.5" y1="38" x2="2459.5" y2="138" stroke="#5c5d63" stroke-width="1" stroke-dasharray="4 2"/>
<line x1="2459.5" y1="138" x2="2459.5" y2="238" stroke="#5c5d63" stroke-width="1" stroke-dasharray="4 2"/>
<line x1="2459.5" y1="238" x2="2459.5" y2="338" stroke="#5c5d63" stroke-width="1" stroke-dasharray="4 2"/>
<line x1="2459.5" y1="338" x2="2459.5" y2="438" stroke="#5c5d63" stroke-width="1" stroke-dasharray="4 2"/>
<line x1="2459.5" y1="438" x2="2459.5" y2="538" stroke="#5c5d63" stroke-width="1" stroke-dasharray="4 2"/>
<line x1="2459.5" y1="538" x2="2459.5" y2="638" stroke="#5c5d63" stroke-width="1" stroke-dasharray="4 2"/>
<line x1="2459.5" y1="638" x2="2459.5" y2="738" stroke="#5c5d63" stroke-width="1" stroke-dasharray="4 2"/>
<line x1="2459.5" y1="738" x2="2459.5" y2="838" stroke="#5c5d63" stroke-width="1" stroke-dasharray="4 2"/>
<line x1="2459.5" y1="34" x2="2459.5" y2="38" stroke="#5c5d63" stroke-width="1"/>
<rect x="180" y="38" width="2320" height="1" fill="#2a2a2f"/>
<line x1="180" y1="152.5" x2="2500" y2="152.5" stroke="#5c5d62" stroke-width="1" stroke-dasharray="4 2"/>
<line x1="180" y1="226.5" x2="2500" y2="226.5" stroke="#35353a" stroke-width="1"/>
<line x1="180" y1="279.5" x2="2500" y2="279.5" stroke="#5c5d62" stroke-width="1" stroke-dasharray="4 2"/>
<line x1="180" y1="326.5" x2="2500" y2="326.5" stroke="#35353a" stroke-width="1"/>
<line x1="180" y1="356.5" x2="2500" y2="356.5" stroke="#5c5d62" stroke-width="1" stroke-dasharray="4 2"/>
<line x1="180" y1="426.5" x2="2500" y2="426.5" stroke="#35353a" stroke-width="1"/>
<line x1="180" y1="478.5" x2="2500" y2="478.5" stroke="#5c5d62" stroke-width="1" stroke-dasharray="4 2"/>
<line x1="180" y1="524.5" x2="2500" y2="524.5" stroke="#35353a" stroke-width="1"/>
<line x1="180" y1="577.5" x2="2500" y2="577.5" stroke="#5c5d62" stroke-width="1" stroke-dasharray="4 2"/>
<line x1="180" y1="624.5" x2="2500" y2="624.5" stroke="#35353a" stroke-width="1"/>
<line x1="180" y1="669.5" x2="2500" y2="669.5" stroke="#5c5d62" stroke-width="1" stroke-dasharray="4 2"/>
<line x1="180" y1="725.5" x2="2500" y2="725.5" stroke="#35353a" stroke-width="1"/>
<line x1="180" y1="778.5" x2="2500" y2="778.5" stroke="#5c5d62" stroke-width="1" stroke-dasharray="4 2"/>
<line x1="180" y1="826.5" x2="2500" y2="826.5" stroke="#35353a" stroke-width="1"/>
<path d="M180.0,128.5 L1387.5,128.5 L1387.5,47.5 L2162.5,47.5 L2162.5,128.5 L2500.0,128.5" fill="none" stroke="#0a0d10" stroke-opacity="0.55" stroke-width="3.6" stroke-linejoin="miter"/><path d="M180.0,128.5 L1387.5,128.5 L1387.5,47.5 L2162.5,47.5 L2162.5,128.5 L2500.0,128.5" fill="none" stroke="#e8d83a" stroke-width="1.4" stroke-linejoin="miter"/>
<path d="M180.0,225.6 L184.0,225.6 L188.0,226.3 L192.0,226.3 L196.0,225.6 L200.0,225.6 L204.0,226.3 L208.0,226.3 L212.0,225.6 L216.0,225.6 L220.0,226.3 L224.0,226.3 L228.0,226.3 L232.0,225.6 L236.0,225.6 L240.0,225.6 L244.0,226.3 L248.0,225.6 L252.0,225.6 L256.0,225.6 L260.0,225.6 L264.0,226.3 L268.0,225.6 L272.0,226.3 L276.0,226.3 L280.0,226.3 L284.0,226.3 L288.0,226.3 L292.0,226.3 L296.0,225.6 L300.0,226.3 L304.0,225.6 L308.0,225.6 L312.0,225.6 L316.0,226.3 L320.0,225.6 L324.0,226.3 L328.0,226.3 L332.0,226.3 L336.0,226.3 L340.0,226.3 L344.0,226.3 L348.0,226.3 L352.0,225.6 L356.0,226.3 L360.0,225.6 L364.0,226.3 L368.0,225.6 L372.0,226.3 L376.0,225.6 L380.0,225.6 L384.0,226.3 L388.0,226.3 L392.0,225.6 L396.0,225.6 L400.0,226.3 L404.0,226.3 L408.0,225.6 L412.0,226.3 L416.0,225.6 L420.0,226.3 L424.0,225.6 L428.0,225.6 L432.0,226.3 L436.0,226.3 L440.0,226.3 L444.0,225.6 L448.0,225.6 L452.0,225.6 L456.0,226.3 L460.0,226.3 L464.0,226.3 L468.0,225.6 L472.0,225.6 L476.0,226.3 L480.0,225.6 L484.0,225.6 L488.0,225.6 L492.0,225.6 L496.0,225.6 L500.0,226.3 L504.0,226.3 L508.0,226.3 L512.0,225.6 L516.0,225.6 L520.0,226.3 L524.0,226.3 L528.0,226.3 L532.0,225.6 L536.0,226.3 L540.0,226.3 L544.0,226.3 L548.0,226.3 L552.0,225.6 L556.0,226.3 L560.0,226.3 L564.0,225.6 L568.0,226.3 L572.0,226.3 L575.2,226.0 L575.2,147.6 L2500.0,147.6" fill="none" stroke="#0a0d10" stroke-opacity="0.55" stroke-width="4.0" stroke-linejoin="miter"/><path d="M180.0,225.6 L184.0,225.6 L188.0,226.3 L192.0,226.3 L196.0,225.6 L200.0,225.6 L204.0,226.3 L208.0,226.3 L212.0,225.6 L216.0,225.6 L220.0,226.3 L224.0,226.3 L228.0,226.3 L232.0,225.6 L236.0,225.6 L240.0,225.6 L244.0,226.3 L248.0,225.6 L252.0,225.6 L256.0,225.6 L260.0,225.6 L264.0,226.3 L268.0,225.6 L272.0,226.3 L276.0,226.3 L280.0,226.3 L284.0,226.3 L288.0,226.3 L292.0,226.3 L296.0,225.6 L300.0,226.3 L304.0,225.6 L308.0,225.6 L312.0,225.6 L316.0,226.3 L320.0,225.6 L324.0,226.3 L328.0,226.3 L332.0,226.3 L336.0,226.3 L340.0,226.3 L344.0,226.3 L348.0,226.3 L352.0,225.6 L356.0,226.3 L360.0,225.6 L364.0,226.3 L368.0,225.6 L372.0,226.3 L376.0,225.6 L380.0,225.6 L384.0,226.3 L388.0,226.3 L392.0,225.6 L396.0,225.6 L400.0,226.3 L404.0,226.3 L408.0,225.6 L412.0,226.3 L416.0,225.6 L420.0,226.3 L424.0,225.6 L428.0,225.6 L432.0,226.3 L436.0,226.3 L440.0,226.3 L444.0,225.6 L448.0,225.6 L452.0,225.6 L456.0,226.3 L460.0,226.3 L464.0,226.3 L468.0,225.6 L472.0,225.6 L476.0,226.3 L480.0,225.6 L484.0,225.6 L488.0,225.6 L492.0,225.6 L496.0,225.6 L500.0,226.3 L504.0,226.3 L508.0,226.3 L512.0,225.6 L516.0,225.6 L520.0,226.3 L524.0,226.3 L528.0,226.3 L532.0,225.6 L536.0,226.3 L540.0,226.3 L544.0,226.3 L548.0,226.3 L552.0,225.6 L556.0,226.3 L560.0,226.3 L564.0,225.6 L568.0,226.3 L572.0,226.3 L575.2,226.0 L575.2,147.6 L2500.0,147.6" fill="none" stroke="#dcdcdc" stroke-width="1.8" stroke-linejoin="miter"/>
<path d="M180.0,426.5 L575.5,426.5 L575.5,352.5 L2500.0,352.5" fill="none" stroke="#0a0d10" stroke-opacity="0.55" stroke-width="3.8000000000000003" stroke-linejoin="miter"/><path d="M180.0,426.5 L575.5,426.5 L575.5,352.5 L2500.0,352.5" fill="none" stroke="#d25a69" stroke-width="1.6" stroke-linejoin="miter"/>
<rect x="180" y="252.5" width="383" height="75" fill="#cf997b"/>
<rect x="183" y="254" width="1" height="73.5" fill="#1c1c1c"/>
<rect x="187" y="254" width="1" height="73.5" fill="#1c1c1c"/>
<rect x="189" y="254" width="5" height="72.5" fill="#9e7762"/>
<rect x="195" y="252.5" width="1" height="73.5" fill="#1c1c1c"/>
<rect x="197" y="254" width="3" height="72.5" fill="#9e7762"/>
<rect x="201" y="254" width="1" height="73.5" fill="#1c1c1c"/>
<rect x="205" y="252.5" width="2" height="73.5" fill="#1c1c1c"/>
<rect x="210" y="252.5" width="2" height="73.5" fill="#1c1c1c"/>
<rect x="213" y="254" width="2" height="72.5" fill="#9e7762"/>
<rect x="216" y="254" width="1" height="73.5" fill="#1c1c1c"/>
<rect x="220" y="252.5" width="1" height="73.5" fill="#1c1c1c"/>
<rect x="224" y="254" width="1" height="73.5" fill="#1c1c1c"/>
<rect x="228" y="252.5" width="1" height="73.5" fill="#1c1c1c"/>
<rect x="232" y="252.5" width="1" height="73.5" fill="#1c1c1c"/>
<rect x="234" y="254" width="2" height="72.5" fill="#9e7762"/>
<rect x="239" y="254" width="4" height="72.5" fill="#9e7762"/>
<rect x="244" y="252.5" width="1" height="73.5" fill="#1c1c1c"/>
<rect x="246" y="254" width="5" height="72.5" fill="#9e7762"/>
<rect x="252" y="254" width="2" height="73.5" fill="#1c1c1c"/>
<rect x="255" y="254" width="2" height="72.5" fill="#9e7762"/>
<rect x="258" y="254" width="1" height="73.5" fill="#1c1c1c"/>
<rect x="260" y="254" width="5" height="72.5" fill="#9e7762"/>
<rect x="266" y="252.5" width="1" height="73.5" fill="#1c1c1c"/>
<rect x="270" y="254" width="1" height="73.5" fill="#1c1c1c"/>
<rect x="274" y="254" width="1" height="73.5" fill="#1c1c1c"/>
<rect x="278" y="254" width="1" height="73.5" fill="#1c1c1c"/>
<rect x="282" y="252.5" width="2" height="73.5" fill="#1c1c1c"/>
<rect x="287" y="252.5" width="1" height="73.5" fill="#1c1c1c"/>
<rect x="290" y="252.5" width="1" height="73.5" fill="#1c1c1c"/>
<rect x="294" y="252.5" width="1" height="73.5" fill="#1c1c1c"/>
<rect x="297" y="254" width="1" height="73.5" fill="#1c1c1c"/>
<rect x="299" y="254" width="2" height="72.5" fill="#9e7762"/>
<rect x="302" y="254" width="1" height="73.5" fill="#1c1c1c"/>
<rect x="304" y="254" width="5" height="72.5" fill="#9e7762"/>
<rect x="310" y="254" width="1" height="73.5" fill="#1c1c1c"/>
<rect x="312" y="254" width="5" height="72.5" fill="#9e7762"/>
<rect x="318" y="252.5" width="1" height="73.5" fill="#1c1c1c"/>
<rect x="322" y="254" width="2" height="73.5" fill="#1c1c1c"/>
<rect x="325" y="254" width="2" height="72.5" fill="#9e7762"/>
<rect x="328" y="252.5" width="2" height="73.5" fill="#1c1c1c"/>
<rect x="331" y="254" width="3" height="72.5" fill="#9e7762"/>
<rect x="335" y="252.5" width="2" height="73.5" fill="#1c1c1c"/>
<rect x="340" y="254" width="1" height="73.5" fill="#1c1c1c"/>
<rect x="342" y="254" width="5" height="72.5" fill="#9e7762"/>
<rect x="348" y="254" width="1" height="73.5" fill="#1c1c1c"/>
<rect x="352" y="252.5" width="1" height="73.5" fill="#1c1c1c"/>
<rect x="354" y="254" width="5" height="72.5" fill="#9e7762"/>
<rect x="360" y="252.5" width="1" height="73.5" fill="#1c1c1c"/>
<rect x="364" y="254" width="2" height="73.5" fill="#1c1c1c"/>
<rect x="367" y="254" width="5" height="72.5" fill="#9e7762"/>
<rect x="373" y="254" width="1" height="73.5" fill="#1c1c1c"/>
<rect x="377" y="254" width="1" height="73.5" fill="#1c1c1c"/>
<rect x="380" y="252.5" width="1" height="73.5" fill="#1c1c1c"/>
<rect x="384" y="252.5" width="2" height="73.5" fill="#1c1c1c"/>
<rect x="389" y="254" width="1" height="73.5" fill="#1c1c1c"/>
<rect x="392" y="254" width="2" height="73.5" fill="#1c1c1c"/>
<rect x="395" y="254" width="4" height="72.5" fill="#9e7762"/>
<rect x="400" y="252.5" width="2" height="73.5" fill="#1c1c1c"/>
<rect x="405" y="252.5" width="1" height="73.5" fill="#1c1c1c"/>
<rect x="409" y="254" width="1" height="73.5" fill="#1c1c1c"/>
<rect x="411" y="254" width="5" height="72.5" fill="#9e7762"/>
<rect x="417" y="254" width="1" height="73.5" fill="#1c1c1c"/>
<rect x="421" y="254" width="1" height="73.5" fill="#1c1c1c"/>
<rect x="425" y="254" width="1" height="73.5" fill="#1c1c1c"/>
<rect x="429" y="254" width="1" height="73.5" fill="#1c1c1c"/>
<rect x="439" y="254" width="5" height="72.5" fill="#9e7762"/>
<rect x="445" y="252.5" width="1" height="73.5" fill="#1c1c1c"/>
<rect x="448" y="254" width="2" height="73.5" fill="#1c1c1c"/>
<rect x="451" y="254" width="3" height="72.5" fill="#9e7762"/>
<rect x="455" y="252.5" width="1" height="73.5" fill="#1c1c1c"/>
<rect x="457" y="254" width="3" height="72.5" fill="#9e7762"/>
<rect x="461" y="252.5" width="1" height="73.5" fill="#1c1c1c"/>
<rect x="464" y="252.5" width="1" height="73.5" fill="#1c1c1c"/>
<rect x="467" y="252.5" width="1" height="73.5" fill="#1c1c1c"/>
<rect x="469" y="254" width="5" height="72.5" fill="#9e7762"/>
<rect x="475" y="254" width="1" height="73.5" fill="#1c1c1c"/>
<rect x="478" y="252.5" width="1" height="73.5" fill="#1c1c1c"/>
<rect x="482" y="254" width="1" height="73.5" fill="#1c1c1c"/>
<rect x="486" y="254" width="2" height="73.5" fill="#1c1c1c"/>
<rect x="491" y="252.5" width="2" height="73.5" fill="#1c1c1c"/>
<rect x="496" y="254" width="1" height="73.5" fill="#1c1c1c"/>
<rect x="500" y="252.5" width="1" height="73.5" fill="#1c1c1c"/>
<rect x="502" y="254" width="3" height="72.5" fill="#9e7762"/>
<rect x="506" y="254" width="1" height="73.5" fill="#1c1c1c"/>
<rect x="510" y="252.5" width="2" height="73.5" fill="#1c1c1c"/>
<rect x="513" y="254" width="4" height="72.5" fill="#9e7762"/>
<rect x="518" y="254" width="2" height="73.5" fill="#1c1c1c"/>
<rect x="523" y="254" width="1" height="73.5" fill="#1c1c1c"/>
<rect x="525" y="254" width="4" height="72.5" fill="#9e7762"/>
<rect x="530" y="252.5" width="2" height="73.5" fill="#1c1c1c"/>
<rect x="535" y="254" width="2" height="73.5" fill="#1c1c1c"/>
<rect x="538" y="254" width="2" height="72.5" fill="#9e7762"/>
<rect x="541" y="254" width="1" height="73.5" fill="#1c1c1c"/>
<rect x="545" y="252.5" width="1" height="73.5" fill="#1c1c1c"/>
<rect x="547" y="254" width="5" height="72.5" fill="#9e7762"/>
<rect x="553" y="252.5" width="1" height="73.5" fill="#1c1c1c"/>
<rect x="557" y="254" width="2" height="73.5" fill="#1c1c1c"/>
<rect x="560" y="254" width="4" height="72.5" fill="#9e7762"/>
<rect x="236" y="254" width="4" height="73.5" fill="#1c1c1c"/>
<rect x="433" y="254" width="3" height="73.5" fill="#1c1c1c"/>
<rect x="554" y="254" width="9" height="73.5" fill="#cf997b"/>
<rect x="559" y="252.5" width="1.2" height="73.5" fill="#1c1c1c"/>
<rect x="555.5" y="254" width="0.8" height="73.5" fill="#1c1c1c"/>
<line x1="204.5" y1="252.5" x2="204.5" y2="327.5" stroke="#c8b0a0" stroke-opacity="0.35" stroke-width="1" stroke-dasharray="4 2" stroke-dashoffset="-0.6"/>
<line x1="254.5" y1="252.5" x2="254.5" y2="327.5" stroke="#c8b0a0" stroke-opacity="0.35" stroke-width="1" stroke-dasharray="4 2" stroke-dashoffset="-0.6"/>
<line x1="304.5" y1="252.5" x2="304.5" y2="327.5" stroke="#c8b0a0" stroke-opacity="0.35" stroke-width="1" stroke-dasharray="4 2" stroke-dashoffset="-0.6"/>
<line x1="354.5" y1="252.5" x2="354.5" y2="327.5" stroke="#c8b0a0" stroke-opacity="0.35" stroke-width="1" stroke-dasharray="4 2" stroke-dashoffset="-0.6"/>
<line x1="404.5" y1="252.5" x2="404.5" y2="327.5" stroke="#c8b0a0" stroke-opacity="0.35" stroke-width="1" stroke-dasharray="4 2" stroke-dashoffset="-0.6"/>
<line x1="454.5" y1="252.5" x2="454.5" y2="327.5" stroke="#c8b0a0" stroke-opacity="0.35" stroke-width="1" stroke-dasharray="4 2" stroke-dashoffset="-0.6"/>
<line x1="504.5" y1="252.5" x2="504.5" y2="327.5" stroke="#c8b0a0" stroke-opacity="0.35" stroke-width="1" stroke-dasharray="4 2" stroke-dashoffset="-0.6"/>
<line x1="555.5" y1="252.5" x2="555.5" y2="327.5" stroke="#c8b0a0" stroke-opacity="0.35" stroke-width="1" stroke-dasharray="4 2" stroke-dashoffset="-0.6"/>
<line x1="180" y1="279.5" x2="563" y2="279.5" stroke="#c8b0a0" stroke-opacity="0.35" stroke-width="1" stroke-dasharray="4 2"/>
<path d="M563.0,253.0 L563.0,327.0 L565.5,327.0 L565.5,302.0 L566.0,305.5 L574.0,305.5 L574.0,287.5 L580.0,288.5 L580.0,319.0 L582.0,319.0 L582.0,288.5 L588.0,288.5 L588.0,320.0 L589.5,320.0 L589.5,288.5 L592.0,288.5 L592.0,327.0 L593.0,327.0 L593.0,288.5 L598.0,288.5 L598.0,320.0 L599.0,320.0 L599.0,288.5 L603.0,288.5 L603.0,323.0 L609.0,323.0 L609.0,288.5 L2500.0,288.5" fill="none" stroke="#d39c7e" stroke-width="1.4" stroke-linejoin="miter"/>
<rect x="603" y="289" width="6" height="34" fill="#c9977a"/>
<path d="M180.0,448.5 L192.0,448.5 L192.0,525.6 L193.0,524.5 L196.4,524.5 L196.4,447.4 L197.4,448.5 L202.4,448.5 L202.4,525.6 L203.4,524.5 L206.9,524.5 L206.9,447.4 L207.9,448.5 L212.3,448.5 L212.3,525.6 L213.3,524.5 L217.0,524.5 L217.0,447.4 L218.0,448.5 L223.0,448.5 L223.0,525.6 L224.0,524.5 L228.2,524.5 L228.2,447.4 L229.2,448.5 L387.1,448.5 L387.1,525.6 L388.1,524.5 L391.5,524.5 L391.5,447.4 L392.5,448.5 L397.5,448.5 L397.5,525.6 L398.5,524.5 L402.0,524.5 L402.0,447.4 L403.0,448.5 L407.4,448.5 L407.4,525.6 L408.4,524.5 L412.0,524.5 L412.0,447.4 L413.0,448.5 L418.0,448.5 L418.0,525.6 L419.0,524.5 L423.2,524.5 L423.2,447.4 L424.2,448.5 L570.6,448.5 L570.6,525.6 L571.6,524.5 L574.9,524.5 L574.9,447.4 L575.9,448.5 L580.8,448.5 L580.8,525.6 L581.8,524.5 L585.3,524.5 L585.3,447.4 L586.3,448.5 L590.6,448.5 L590.6,525.6 L591.6,524.5 L595.2,524.5 L595.2,447.4 L596.2,448.5 L601.1,448.5 L601.1,525.6 L602.1,524.5 L606.2,524.5 L606.2,447.4 L607.2,448.5 L764.6,448.5 L764.6,525.6 L765.6,524.5 L769.0,524.5 L769.0,447.4 L770.0,448.5 L774.9,448.5 L774.9,525.6 L775.9,524.5 L779.3,524.5 L779.3,447.4 L780.3,448.5 L784.7,448.5 L784.7,525.6 L785.7,524.5 L789.3,524.5 L789.3,447.4 L790.3,448.5 L795.2,448.5 L795.2,525.6 L796.2,524.5 L800.4,524.5 L800.4,447.4 L801.4,448.5 L958.4,448.5 L958.4,525.6 L959.4,524.5 L962.8,524.5 L962.8,447.4 L963.8,448.5 L968.7,448.5 L968.7,525.6 L969.7,524.5 L973.2,524.5 L973.2,447.4 L974.2,448.5 L978.6,448.5 L978.6,525.6 L979.6,524.5 L983.3,524.5 L983.3,447.4 L984.3,448.5 L989.2,448.5 L989.2,525.6 L990.2,524.5 L994.4,524.5 L994.4,447.4 L995.4,448.5 L1152.4,448.5 L1152.4,525.6 L1153.4,524.5 L1156.8,524.5 L1156.8,447.4 L1157.8,448.5 L1162.7,448.5 L1162.7,525.6 L1163.7,524.5 L1167.2,524.5 L1167.2,447.4 L1168.2,448.5 L1172.6,448.5 L1172.6,525.6 L1173.6,524.5 L1177.3,524.5 L1177.3,447.4 L1178.3,448.5 L1183.2,448.5 L1183.2,525.6 L1184.2,524.5 L1188.4,524.5 L1188.4,447.4 L1189.4,448.5 L1346.4,448.5 L1346.4,525.6 L1347.4,524.5 L1350.7,524.5 L1350.7,447.4 L1351.7,448.5 L1356.6,448.5 L1356.6,525.6 L1357.6,524.5 L1361.1,524.5 L1361.1,447.4 L1362.1,448.5 L1366.4,448.5 L1366.4,525.6 L1367.4,524.5 L1371.0,524.5 L1371.0,447.4 L1372.0,448.5 L1376.9,448.5 L1376.9,525.6 L1377.9,524.5 L1382.0,524.5 L1382.0,447.4 L1383.0,448.5 L1541.0,448.5 L1541.0,525.6 L1542.0,524.5 L1545.3,524.5 L1545.3,447.4 L1546.3,448.5 L1551.0,448.5 L1551.0,525.6 L1552.0,524.5 L1555.4,524.5 L1555.4,447.4 L1556.4,448.5 L1560.6,448.5 L1560.6,525.6 L1561.6,524.5 L1565.2,524.5 L1565.2,447.4 L1566.2,448.5 L1571.0,448.5 L1571.0,525.6 L1572.0,524.5 L1576.0,524.5 L1576.0,447.4 L1577.0,448.5 L1735.0,448.5 L1735.0,525.6 L1736.0,524.5 L1739.2,524.5 L1739.2,447.4 L1740.2,448.5 L1744.9,448.5 L1744.9,525.6 L1745.9,524.5 L1749.3,524.5 L1749.3,447.4 L1750.3,448.5 L1754.4,448.5 L1754.4,525.6 L1755.4,524.5 L1758.9,524.5 L1758.9,447.4 L1759.9,448.5 L1764.6,448.5 L1764.6,525.6 L1765.6,524.5 L1769.6,524.5 L1769.6,447.4 L1770.6,448.5 L1929.0,448.5 L1929.0,525.6 L1930.0,524.5 L1933.1,524.5 L1933.1,447.4 L1934.1,448.5 L1938.8,448.5 L1938.8,525.6 L1939.8,524.5 L1943.0,524.5 L1943.0,447.4 L1944.0,448.5 L1948.1,448.5 L1948.1,525.6 L1949.1,524.5 L1952.5,524.5 L1952.5,447.4 L1953.5,448.5 L1958.1,448.5 L1958.1,525.6 L1959.1,524.5 L1963.0,524.5 L1963.0,447.4 L1964.0,448.5 L2123.0,448.5 L2123.0,525.6 L2124.0,524.5 L2127.1,524.5 L2127.1,447.4 L2128.1,448.5 L2132.8,448.5 L2132.8,525.6 L2133.8,524.5 L2137.0,524.5 L2137.0,447.4 L2138.0,448.5 L2142.1,448.5 L2142.1,525.6 L2143.1,524.5 L2146.5,524.5 L2146.5,447.4 L2147.5,448.5 L2152.1,448.5 L2152.1,525.6 L2153.1,524.5 L2157.0,524.5 L2157.0,447.4 L2158.0,448.5 L2317.1,448.5 L2317.1,525.6 L2318.1,524.5 L2321.2,524.5 L2321.2,447.4 L2322.2,448.5 L2326.9,448.5 L2326.9,525.6 L2327.9,524.5 L2331.1,524.5 L2331.1,447.4 L2332.1,448.5 L2336.2,448.5 L2336.2,525.6 L2337.2,524.5 L2340.6,524.5 L2340.6,447.4 L2341.6,448.5 L2346.2,448.5 L2346.2,525.6 L2347.2,524.5 L2351.1,524.5 L2351.1,447.4 L2352.1,448.5 L2500.0,448.5" fill="none" stroke="#0a0d10" stroke-opacity="0.55" stroke-width="3.8000000000000003" stroke-linejoin="miter"/><path d="M180.0,448.5 L192.0,448.5 L192.0,525.6 L193.0,524.5 L196.4,524.5 L196.4,447.4 L197.4,448.5 L202.4,448.5 L202.4,525.6 L203.4,524.5 L206.9,524.5 L206.9,447.4 L207.9,448.5 L212.3,448.5 L212.3,525.6 L213.3,524.5 L217.0,524.5 L217.0,447.4 L218.0,448.5 L223.0,448.5 L223.0,525.6 L224.0,524.5 L228.2,524.5 L228.2,447.4 L229.2,448.5 L387.1,448.5 L387.1,525.6 L388.1,524.5 L391.5,524.5 L391.5,447.4 L392.5,448.5 L397.5,448.5 L397.5,525.6 L398.5,524.5 L402.0,524.5 L402.0,447.4 L403.0,448.5 L407.4,448.5 L407.4,525.6 L408.4,524.5 L412.0,524.5 L412.0,447.4 L413.0,448.5 L418.0,448.5 L418.0,525.6 L419.0,524.5 L423.2,524.5 L423.2,447.4 L424.2,448.5 L570.6,448.5 L570.6,525.6 L571.6,524.5 L574.9,524.5 L574.9,447.4 L575.9,448.5 L580.8,448.5 L580.8,525.6 L581.8,524.5 L585.3,524.5 L585.3,447.4 L586.3,448.5 L590.6,448.5 L590.6,525.6 L591.6,524.5 L595.2,524.5 L595.2,447.4 L596.2,448.5 L601.1,448.5 L601.1,525.6 L602.1,524.5 L606.2,524.5 L606.2,447.4 L607.2,448.5 L764.6,448.5 L764.6,525.6 L765.6,524.5 L769.0,524.5 L769.0,447.4 L770.0,448.5 L774.9,448.5 L774.9,525.6 L775.9,524.5 L779.3,524.5 L779.3,447.4 L780.3,448.5 L784.7,448.5 L784.7,525.6 L785.7,524.5 L789.3,524.5 L789.3,447.4 L790.3,448.5 L795.2,448.5 L795.2,525.6 L796.2,524.5 L800.4,524.5 L800.4,447.4 L801.4,448.5 L958.4,448.5 L958.4,525.6 L959.4,524.5 L962.8,524.5 L962.8,447.4 L963.8,448.5 L968.7,448.5 L968.7,525.6 L969.7,524.5 L973.2,524.5 L973.2,447.4 L974.2,448.5 L978.6,448.5 L978.6,525.6 L979.6,524.5 L983.3,524.5 L983.3,447.4 L984.3,448.5 L989.2,448.5 L989.2,525.6 L990.2,524.5 L994.4,524.5 L994.4,447.4 L995.4,448.5 L1152.4,448.5 L1152.4,525.6 L1153.4,524.5 L1156.8,524.5 L1156.8,447.4 L1157.8,448.5 L1162.7,448.5 L1162.7,525.6 L1163.7,524.5 L1167.2,524.5 L1167.2,447.4 L1168.2,448.5 L1172.6,448.5 L1172.6,525.6 L1173.6,524.5 L1177.3,524.5 L1177.3,447.4 L1178.3,448.5 L1183.2,448.5 L1183.2,525.6 L1184.2,524.5 L1188.4,524.5 L1188.4,447.4 L1189.4,448.5 L1346.4,448.5 L1346.4,525.6 L1347.4,524.5 L1350.7,524.5 L1350.7,447.4 L1351.7,448.5 L1356.6,448.5 L1356.6,525.6 L1357.6,524.5 L1361.1,524.5 L1361.1,447.4 L1362.1,448.5 L1366.4,448.5 L1366.4,525.6 L1367.4,524.5 L1371.0,524.5 L1371.0,447.4 L1372.0,448.5 L1376.9,448.5 L1376.9,525.6 L1377.9,524.5 L1382.0,524.5 L1382.0,447.4 L1383.0,448.5 L1541.0,448.5 L1541.0,525.6 L1542.0,524.5 L1545.3,524.5 L1545.3,447.4 L1546.3,448.5 L1551.0,448.5 L1551.0,525.6 L1552.0,524.5 L1555.4,524.5 L1555.4,447.4 L1556.4,448.5 L1560.6,448.5 L1560.6,525.6 L1561.6,524.5 L1565.2,524.5 L1565.2,447.4 L1566.2,448.5 L1571.0,448.5 L1571.0,525.6 L1572.0,524.5 L1576.0,524.5 L1576.0,447.4 L1577.0,448.5 L1735.0,448.5 L1735.0,525.6 L1736.0,524.5 L1739.2,524.5 L1739.2,447.4 L1740.2,448.5 L1744.9,448.5 L1744.9,525.6 L1745.9,524.5 L1749.3,524.5 L1749.3,447.4 L1750.3,448.5 L1754.4,448.5 L1754.4,525.6 L1755.4,524.5 L1758.9,524.5 L1758.9,447.4 L1759.9,448.5 L1764.6,448.5 L1764.6,525.6 L1765.6,524.5 L1769.6,524.5 L1769.6,447.4 L1770.6,448.5 L1929.0,448.5 L1929.0,525.6 L1930.0,524.5 L1933.1,524.5 L1933.1,447.4 L1934.1,448.5 L1938.8,448.5 L1938.8,525.6 L1939.8,524.5 L1943.0,524.5 L1943.0,447.4 L1944.0,448.5 L1948.1,448.5 L1948.1,525.6 L1949.1,524.5 L1952.5,524.5 L1952.5,447.4 L1953.5,448.5 L1958.1,448.5 L1958.1,525.6 L1959.1,524.5 L1963.0,524.5 L1963.0,447.4 L1964.0,448.5 L2123.0,448.5 L2123.0,525.6 L2124.0,524.5 L2127.1,524.5 L2127.1,447.4 L2128.1,448.5 L2132.8,448.5 L2132.8,525.6 L2133.8,524.5 L2137.0,524.5 L2137.0,447.4 L2138.0,448.5 L2142.1,448.5 L2142.1,525.6 L2143.1,524.5 L2146.5,524.5 L2146.5,447.4 L2147.5,448.5 L2152.1,448.5 L2152.1,525.6 L2153.1,524.5 L2157.0,524.5 L2157.0,447.4 L2158.0,448.5 L2317.1,448.5 L2317.1,525.6 L2318.1,524.5 L2321.2,524.5 L2321.2,447.4 L2322.2,448.5 L2326.9,448.5 L2326.9,525.6 L2327.9,524.5 L2331.1,524.5 L2331.1,447.4 L2332.1,448.5 L2336.2,448.5 L2336.2,525.6 L2337.2,524.5 L2340.6,524.5 L2340.6,447.4 L2341.6,448.5 L2346.2,448.5 L2346.2,525.6 L2347.2,524.5 L2351.1,524.5 L2351.1,447.4 L2352.1,448.5 L2500.0,448.5" fill="none" stroke="#f0a656" stroke-width="1.6" stroke-linejoin="miter"/>
<path d="M180.0,624.5 L196.8,624.5 L196.8,546.4 L197.8,547.5 L202.7,547.5 L202.7,625.6 L203.7,624.5 L207.3,624.5 L207.3,546.4 L208.3,547.5 L212.6,547.5 L212.6,625.6 L213.6,624.5 L217.7,624.5 L217.7,546.4 L218.7,547.5 L223.1,547.5 L223.1,625.6 L224.1,624.5 L228.0,624.5 L228.0,546.4 L229.0,547.5 L233.6,547.5 L233.6,625.6 L234.6,624.5 L391.9,624.5 L391.9,546.4 L392.9,547.5 L397.7,547.5 L397.7,625.6 L398.7,624.5 L402.4,624.5 L402.4,546.4 L403.4,547.5 L407.7,547.5 L407.7,625.6 L408.7,624.5 L412.7,624.5 L412.7,546.4 L413.7,547.5 L418.1,547.5 L418.1,625.6 L419.1,624.5 L423.0,624.5 L423.0,546.4 L424.0,547.5 L428.6,547.5 L428.6,625.6 L429.6,624.5 L575.3,624.5 L575.3,546.4 L576.3,547.5 L581.1,547.5 L581.1,625.6 L582.1,624.5 L585.7,624.5 L585.7,546.4 L586.7,547.5 L590.9,547.5 L590.9,625.6 L591.9,624.5 L595.9,624.5 L595.9,546.4 L596.9,547.5 L601.2,547.5 L601.2,625.6 L602.2,624.5 L606.0,624.5 L606.0,546.4 L607.0,547.5 L611.5,547.5 L611.5,625.6 L612.5,624.5 L769.3,624.5 L769.3,546.4 L770.3,547.5 L775.2,547.5 L775.2,625.6 L776.2,624.5 L779.7,624.5 L779.7,546.4 L780.7,547.5 L785.0,547.5 L785.0,625.6 L786.0,624.5 L790.0,624.5 L790.0,546.4 L791.0,547.5 L795.4,547.5 L795.4,625.6 L796.4,624.5 L800.2,624.5 L800.2,546.4 L801.2,547.5 L805.8,547.5 L805.8,625.6 L806.8,624.5 L963.2,624.5 L963.2,546.4 L964.2,547.5 L969.0,547.5 L969.0,625.6 L970.0,624.5 L973.6,624.5 L973.6,546.4 L974.6,547.5 L978.9,547.5 L978.9,625.6 L979.9,624.5 L984.0,624.5 L984.0,546.4 L985.0,547.5 L989.4,547.5 L989.4,625.6 L990.4,624.5 L994.2,624.5 L994.2,546.4 L995.2,547.5 L999.8,547.5 L999.8,625.6 L1000.8,624.5 L1157.2,624.5 L1157.2,546.4 L1158.2,547.5 L1163.0,547.5 L1163.0,625.6 L1164.0,624.5 L1167.6,624.5 L1167.6,546.4 L1168.6,547.5 L1172.9,547.5 L1172.9,625.6 L1173.9,624.5 L1178.0,624.5 L1178.0,546.4 L1179.0,547.5 L1183.4,547.5 L1183.4,625.6 L1184.4,624.5 L1188.2,624.5 L1188.2,546.4 L1189.2,547.5 L1193.8,547.5 L1193.8,625.6 L1194.8,624.5 L1351.1,624.5 L1351.1,546.4 L1352.1,547.5 L1356.9,547.5 L1356.9,625.6 L1357.9,624.5 L1361.5,624.5 L1361.5,546.4 L1362.5,547.5 L1366.7,547.5 L1366.7,625.6 L1367.7,624.5 L1371.7,624.5 L1371.7,546.4 L1372.7,547.5 L1377.0,547.5 L1377.0,625.6 L1378.0,624.5 L1381.8,624.5 L1381.8,546.4 L1382.8,547.5 L1387.3,547.5 L1387.3,625.6 L1388.3,624.5 L1545.6,624.5 L1545.6,546.4 L1546.6,547.5 L1551.3,547.5 L1551.3,625.6 L1552.3,624.5 L1555.8,624.5 L1555.8,546.4 L1556.8,547.5 L1561.0,547.5 L1561.0,625.6 L1562.0,624.5 L1565.8,624.5 L1565.8,546.4 L1566.8,547.5 L1571.1,547.5 L1571.1,625.6 L1572.1,624.5 L1575.8,624.5 L1575.8,546.4 L1576.8,547.5 L1581.2,547.5 L1581.2,625.6 L1582.2,624.5 L1739.6,624.5 L1739.6,546.4 L1740.6,547.5 L1745.2,547.5 L1745.2,625.6 L1746.2,624.5 L1749.6,624.5 L1749.6,546.4 L1750.6,547.5 L1754.7,547.5 L1754.7,625.6 L1755.7,624.5 L1759.6,624.5 L1759.6,546.4 L1760.6,547.5 L1764.8,547.5 L1764.8,625.6 L1765.8,624.5 L1769.4,624.5 L1769.4,546.4 L1770.4,547.5 L1774.8,547.5 L1774.8,625.6 L1775.8,624.5 L1933.5,624.5 L1933.5,546.4 L1934.5,547.5 L1939.0,547.5 L1939.0,625.6 L1940.0,624.5 L1943.4,624.5 L1943.4,546.4 L1944.4,547.5 L1948.4,547.5 L1948.4,625.6 L1949.4,624.5 L1953.1,624.5 L1953.1,546.4 L1954.1,547.5 L1958.2,547.5 L1958.2,625.6 L1959.2,624.5 L1962.8,624.5 L1962.8,546.4 L1963.8,547.5 L1968.1,547.5 L1968.1,625.6 L1969.1,624.5 L2127.5,624.5 L2127.5,546.4 L2128.5,547.5 L2133.0,547.5 L2133.0,625.6 L2134.0,624.5 L2137.4,624.5 L2137.4,546.4 L2138.4,547.5 L2142.4,547.5 L2142.4,625.6 L2143.4,624.5 L2147.1,624.5 L2147.1,546.4 L2148.1,547.5 L2152.2,547.5 L2152.2,625.6 L2153.2,624.5 L2156.8,624.5 L2156.8,546.4 L2157.8,547.5 L2162.1,547.5 L2162.1,625.6 L2163.1,624.5 L2321.6,624.5 L2321.6,546.4 L2322.6,547.5 L2327.1,547.5 L2327.1,625.6 L2328.1,624.5 L2331.5,624.5 L2331.5,546.4 L2332.5,547.5 L2336.5,547.5 L2336.5,625.6 L2337.5,624.5 L2341.2,624.5 L2341.2,546.4 L2342.2,547.5 L2346.3,547.5 L2346.3,625.6 L2347.3,624.5 L2350.9,624.5 L2350.9,546.4 L2351.9,547.5 L2356.2,547.5 L2356.2,625.6 L2357.2,624.5 L2500.0,624.5" fill="none" stroke="#0a0d10" stroke-opacity="0.55" stroke-width="3.8000000000000003" stroke-linejoin="miter"/><path d="M180.0,624.5 L196.8,624.5 L196.8,546.4 L197.8,547.5 L202.7,547.5 L202.7,625.6 L203.7,624.5 L207.3,624.5 L207.3,546.4 L208.3,547.5 L212.6,547.5 L212.6,625.6 L213.6,624.5 L217.7,624.5 L217.7,546.4 L218.7,547.5 L223.1,547.5 L223.1,625.6 L224.1,624.5 L228.0,624.5 L228.0,546.4 L229.0,547.5 L233.6,547.5 L233.6,625.6 L234.6,624.5 L391.9,624.5 L391.9,546.4 L392.9,547.5 L397.7,547.5 L397.7,625.6 L398.7,624.5 L402.4,624.5 L402.4,546.4 L403.4,547.5 L407.7,547.5 L407.7,625.6 L408.7,624.5 L412.7,624.5 L412.7,546.4 L413.7,547.5 L418.1,547.5 L418.1,625.6 L419.1,624.5 L423.0,624.5 L423.0,546.4 L424.0,547.5 L428.6,547.5 L428.6,625.6 L429.6,624.5 L575.3,624.5 L575.3,546.4 L576.3,547.5 L581.1,547.5 L581.1,625.6 L582.1,624.5 L585.7,624.5 L585.7,546.4 L586.7,547.5 L590.9,547.5 L590.9,625.6 L591.9,624.5 L595.9,624.5 L595.9,546.4 L596.9,547.5 L601.2,547.5 L601.2,625.6 L602.2,624.5 L606.0,624.5 L606.0,546.4 L607.0,547.5 L611.5,547.5 L611.5,625.6 L612.5,624.5 L769.3,624.5 L769.3,546.4 L770.3,547.5 L775.2,547.5 L775.2,625.6 L776.2,624.5 L779.7,624.5 L779.7,546.4 L780.7,547.5 L785.0,547.5 L785.0,625.6 L786.0,624.5 L790.0,624.5 L790.0,546.4 L791.0,547.5 L795.4,547.5 L795.4,625.6 L796.4,624.5 L800.2,624.5 L800.2,546.4 L801.2,547.5 L805.8,547.5 L805.8,625.6 L806.8,624.5 L963.2,624.5 L963.2,546.4 L964.2,547.5 L969.0,547.5 L969.0,625.6 L970.0,624.5 L973.6,624.5 L973.6,546.4 L974.6,547.5 L978.9,547.5 L978.9,625.6 L979.9,624.5 L984.0,624.5 L984.0,546.4 L985.0,547.5 L989.4,547.5 L989.4,625.6 L990.4,624.5 L994.2,624.5 L994.2,546.4 L995.2,547.5 L999.8,547.5 L999.8,625.6 L1000.8,624.5 L1157.2,624.5 L1157.2,546.4 L1158.2,547.5 L1163.0,547.5 L1163.0,625.6 L1164.0,624.5 L1167.6,624.5 L1167.6,546.4 L1168.6,547.5 L1172.9,547.5 L1172.9,625.6 L1173.9,624.5 L1178.0,624.5 L1178.0,546.4 L1179.0,547.5 L1183.4,547.5 L1183.4,625.6 L1184.4,624.5 L1188.2,624.5 L1188.2,546.4 L1189.2,547.5 L1193.8,547.5 L1193.8,625.6 L1194.8,624.5 L1351.1,624.5 L1351.1,546.4 L1352.1,547.5 L1356.9,547.5 L1356.9,625.6 L1357.9,624.5 L1361.5,624.5 L1361.5,546.4 L1362.5,547.5 L1366.7,547.5 L1366.7,625.6 L1367.7,624.5 L1371.7,624.5 L1371.7,546.4 L1372.7,547.5 L1377.0,547.5 L1377.0,625.6 L1378.0,624.5 L1381.8,624.5 L1381.8,546.4 L1382.8,547.5 L1387.3,547.5 L1387.3,625.6 L1388.3,624.5 L1545.6,624.5 L1545.6,546.4 L1546.6,547.5 L1551.3,547.5 L1551.3,625.6 L1552.3,624.5 L1555.8,624.5 L1555.8,546.4 L1556.8,547.5 L1561.0,547.5 L1561.0,625.6 L1562.0,624.5 L1565.8,624.5 L1565.8,546.4 L1566.8,547.5 L1571.1,547.5 L1571.1,625.6 L1572.1,624.5 L1575.8,624.5 L1575.8,546.4 L1576.8,547.5 L1581.2,547.5 L1581.2,625.6 L1582.2,624.5 L1739.6,624.5 L1739.6,546.4 L1740.6,547.5 L1745.2,547.5 L1745.2,625.6 L1746.2,624.5 L1749.6,624.5 L1749.6,546.4 L1750.6,547.5 L1754.7,547.5 L1754.7,625.6 L1755.7,624.5 L1759.6,624.5 L1759.6,546.4 L1760.6,547.5 L1764.8,547.5 L1764.8,625.6 L1765.8,624.5 L1769.4,624.5 L1769.4,546.4 L1770.4,547.5 L1774.8,547.5 L1774.8,625.6 L1775.8,624.5 L1933.5,624.5 L1933.5,546.4 L1934.5,547.5 L1939.0,547.5 L1939.0,625.6 L1940.0,624.5 L1943.4,624.5 L1943.4,546.4 L1944.4,547.5 L1948.4,547.5 L1948.4,625.6 L1949.4,624.5 L1953.1,624.5 L1953.1,546.4 L1954.1,547.5 L1958.2,547.5 L1958.2,625.6 L1959.2,624.5 L1962.8,624.5 L1962.8,546.4 L1963.8,547.5 L1968.1,547.5 L1968.1,625.6 L1969.1,624.5 L2127.5,624.5 L2127.5,546.4 L2128.5,547.5 L2133.0,547.5 L2133.0,625.6 L2134.0,624.5 L2137.4,624.5 L2137.4,546.4 L2138.4,547.5 L2142.4,547.5 L2142.4,625.6 L2143.4,624.5 L2147.1,624.5 L2147.1,546.4 L2148.1,547.5 L2152.2,547.5 L2152.2,625.6 L2153.2,624.5 L2156.8,624.5 L2156.8,546.4 L2157.8,547.5 L2162.1,547.5 L2162.1,625.6 L2163.1,624.5 L2321.6,624.5 L2321.6,546.4 L2322.6,547.5 L2327.1,547.5 L2327.1,625.6 L2328.1,624.5 L2331.5,624.5 L2331.5,546.4 L2332.5,547.5 L2336.5,547.5 L2336.5,625.6 L2337.5,624.5 L2341.2,624.5 L2341.2,546.4 L2342.2,547.5 L2346.3,547.5 L2346.3,625.6 L2347.3,624.5 L2350.9,624.5 L2350.9,546.4 L2351.9,547.5 L2356.2,547.5 L2356.2,625.6 L2357.2,624.5 L2500.0,624.5" fill="none" stroke="#5cc46c" stroke-width="1.6" stroke-linejoin="miter"/>
<path d="M180.0,723.4 L192.0,723.4 L192.0,648.7 L197.0,648.7 L197.0,724.8 L202.2,724.8 L202.2,648.7 L207.1,648.7 L207.1,724.8 L211.8,724.8 L211.8,648.7 L217.0,648.7 L217.0,713.4 L218.2,713.4 L218.2,724.8 L222.6,724.8 L222.6,648.7 L228.2,648.7 L228.2,724.8 L231.7,725.4 L232.7,723.4 L387.1,723.4 L387.1,648.7 L392.1,648.7 L392.1,724.8 L397.3,724.8 L397.3,648.7 L402.2,648.7 L402.2,671.5 L403.4,671.5 L403.4,724.8 L406.8,724.8 L406.8,648.7 L412.0,648.7 L412.0,724.8 L417.6,724.8 L417.6,648.7 L423.2,648.7 L423.2,724.8 L426.7,725.4 L427.7,723.4 L570.6,723.4 L570.6,648.7 L575.5,648.7 L575.5,724.8 L580.6,724.8 L580.6,648.7 L585.4,648.7 L585.4,724.8 L590.1,724.8 L590.1,648.7 L595.2,648.7 L595.2,724.8 L600.7,724.8 L600.7,648.7 L606.2,648.7 L606.2,724.8 L609.7,725.4 L610.7,723.4 L764.6,723.4 L764.6,648.7 L769.5,648.7 L769.5,724.8 L774.7,724.8 L774.7,648.7 L779.5,648.7 L779.5,724.8 L784.2,724.8 L784.2,648.7 L789.3,648.7 L789.3,724.8 L794.9,724.8 L794.9,648.7 L800.4,648.7 L800.4,724.8 L803.9,725.4 L804.9,723.4 L958.4,723.4 L958.4,648.7 L963.4,648.7 L963.4,724.8 L968.6,724.8 L968.6,648.7 L973.4,648.7 L973.4,724.8 L978.1,724.8 L978.1,648.7 L983.3,648.7 L983.3,724.8 L988.8,724.8 L988.8,648.7 L994.4,648.7 L994.4,724.8 L997.9,725.4 L998.9,723.4 L1152.4,723.4 L1152.4,648.7 L1157.4,648.7 L1157.4,724.8 L1162.6,724.8 L1162.6,648.7 L1167.4,648.7 L1167.4,724.8 L1172.1,724.8 L1172.1,648.7 L1177.3,648.7 L1177.3,724.8 L1182.8,724.8 L1182.8,648.7 L1188.4,648.7 L1188.4,724.8 L1191.9,725.4 L1192.9,723.4 L1346.4,723.4 L1346.4,648.7 L1351.3,648.7 L1351.3,724.8 L1356.4,724.8 L1356.4,648.7 L1361.2,648.7 L1361.2,724.8 L1365.9,724.8 L1365.9,648.7 L1371.0,648.7 L1371.0,724.8 L1376.5,724.8 L1376.5,648.7 L1382.0,648.7 L1382.0,724.8 L1385.5,725.4 L1386.5,723.4 L1541.0,723.4 L1541.0,648.7 L1545.8,648.7 L1545.8,724.8 L1550.9,724.8 L1550.9,648.7 L1555.6,648.7 L1555.6,724.8 L1560.1,724.8 L1560.1,648.7 L1565.2,648.7 L1565.2,724.8 L1570.6,724.8 L1570.6,648.7 L1576.0,648.7 L1576.0,724.8 L1579.5,725.4 L1580.5,723.4 L1735.0,723.4 L1735.0,648.7 L1739.8,648.7 L1739.8,724.8 L1744.8,724.8 L1744.8,648.7 L1749.4,648.7 L1749.4,724.8 L1753.9,724.8 L1753.9,648.7 L1758.9,648.7 L1758.9,724.8 L1764.2,724.8 L1764.2,648.7 L1769.6,648.7 L1769.6,686.8 L1770.8,686.8 L1770.8,724.8 L1774.3,725.4 L1775.3,723.4 L1929.0,723.4 L1929.0,648.7 L1933.7,648.7 L1933.7,724.8 L1938.6,724.8 L1938.6,648.7 L1943.2,648.7 L1943.2,724.8 L1947.6,724.8 L1947.6,648.7 L1952.5,648.7 L1952.5,724.8 L1957.7,724.8 L1957.7,648.7 L1963.0,648.7 L1963.0,724.8 L1966.5,725.4 L1967.5,723.4 L2123.0,723.4 L2123.0,648.7 L2127.7,648.7 L2127.7,724.8 L2132.6,724.8 L2132.6,648.7 L2137.2,648.7 L2137.2,724.8 L2141.6,724.8 L2141.6,648.7 L2146.5,648.7 L2146.5,724.8 L2151.7,724.8 L2151.7,648.7 L2157.0,648.7 L2157.0,705.8 L2158.2,705.8 L2158.2,724.8 L2161.7,725.4 L2162.7,723.4 L2317.1,723.4 L2317.1,648.7 L2321.8,648.7 L2321.8,724.8 L2326.7,724.8 L2326.7,648.7 L2331.3,648.7 L2331.3,724.8 L2335.7,724.8 L2335.7,648.7 L2340.6,648.7 L2340.6,671.5 L2341.8,671.5 L2341.8,724.8 L2345.8,724.8 L2345.8,648.7 L2351.1,648.7 L2351.1,724.8 L2354.6,725.4 L2355.6,723.4 L2500.0,723.4" fill="none" stroke="#0a0d10" stroke-opacity="0.55" stroke-width="3.9000000000000004" stroke-linejoin="miter"/><path d="M180.0,723.4 L192.0,723.4 L192.0,648.7 L197.0,648.7 L197.0,724.8 L202.2,724.8 L202.2,648.7 L207.1,648.7 L207.1,724.8 L211.8,724.8 L211.8,648.7 L217.0,648.7 L217.0,713.4 L218.2,713.4 L218.2,724.8 L222.6,724.8 L222.6,648.7 L228.2,648.7 L228.2,724.8 L231.7,725.4 L232.7,723.4 L387.1,723.4 L387.1,648.7 L392.1,648.7 L392.1,724.8 L397.3,724.8 L397.3,648.7 L402.2,648.7 L402.2,671.5 L403.4,671.5 L403.4,724.8 L406.8,724.8 L406.8,648.7 L412.0,648.7 L412.0,724.8 L417.6,724.8 L417.6,648.7 L423.2,648.7 L423.2,724.8 L426.7,725.4 L427.7,723.4 L570.6,723.4 L570.6,648.7 L575.5,648.7 L575.5,724.8 L580.6,724.8 L580.6,648.7 L585.4,648.7 L585.4,724.8 L590.1,724.8 L590.1,648.7 L595.2,648.7 L595.2,724.8 L600.7,724.8 L600.7,648.7 L606.2,648.7 L606.2,724.8 L609.7,725.4 L610.7,723.4 L764.6,723.4 L764.6,648.7 L769.5,648.7 L769.5,724.8 L774.7,724.8 L774.7,648.7 L779.5,648.7 L779.5,724.8 L784.2,724.8 L784.2,648.7 L789.3,648.7 L789.3,724.8 L794.9,724.8 L794.9,648.7 L800.4,648.7 L800.4,724.8 L803.9,725.4 L804.9,723.4 L958.4,723.4 L958.4,648.7 L963.4,648.7 L963.4,724.8 L968.6,724.8 L968.6,648.7 L973.4,648.7 L973.4,724.8 L978.1,724.8 L978.1,648.7 L983.3,648.7 L983.3,724.8 L988.8,724.8 L988.8,648.7 L994.4,648.7 L994.4,724.8 L997.9,725.4 L998.9,723.4 L1152.4,723.4 L1152.4,648.7 L1157.4,648.7 L1157.4,724.8 L1162.6,724.8 L1162.6,648.7 L1167.4,648.7 L1167.4,724.8 L1172.1,724.8 L1172.1,648.7 L1177.3,648.7 L1177.3,724.8 L1182.8,724.8 L1182.8,648.7 L1188.4,648.7 L1188.4,724.8 L1191.9,725.4 L1192.9,723.4 L1346.4,723.4 L1346.4,648.7 L1351.3,648.7 L1351.3,724.8 L1356.4,724.8 L1356.4,648.7 L1361.2,648.7 L1361.2,724.8 L1365.9,724.8 L1365.9,648.7 L1371.0,648.7 L1371.0,724.8 L1376.5,724.8 L1376.5,648.7 L1382.0,648.7 L1382.0,724.8 L1385.5,725.4 L1386.5,723.4 L1541.0,723.4 L1541.0,648.7 L1545.8,648.7 L1545.8,724.8 L1550.9,724.8 L1550.9,648.7 L1555.6,648.7 L1555.6,724.8 L1560.1,724.8 L1560.1,648.7 L1565.2,648.7 L1565.2,724.8 L1570.6,724.8 L1570.6,648.7 L1576.0,648.7 L1576.0,724.8 L1579.5,725.4 L1580.5,723.4 L1735.0,723.4 L1735.0,648.7 L1739.8,648.7 L1739.8,724.8 L1744.8,724.8 L1744.8,648.7 L1749.4,648.7 L1749.4,724.8 L1753.9,724.8 L1753.9,648.7 L1758.9,648.7 L1758.9,724.8 L1764.2,724.8 L1764.2,648.7 L1769.6,648.7 L1769.6,686.8 L1770.8,686.8 L1770.8,724.8 L1774.3,725.4 L1775.3,723.4 L1929.0,723.4 L1929.0,648.7 L1933.7,648.7 L1933.7,724.8 L1938.6,724.8 L1938.6,648.7 L1943.2,648.7 L1943.2,724.8 L1947.6,724.8 L1947.6,648.7 L1952.5,648.7 L1952.5,724.8 L1957.7,724.8 L1957.7,648.7 L1963.0,648.7 L1963.0,724.8 L1966.5,725.4 L1967.5,723.4 L2123.0,723.4 L2123.0,648.7 L2127.7,648.7 L2127.7,724.8 L2132.6,724.8 L2132.6,648.7 L2137.2,648.7 L2137.2,724.8 L2141.6,724.8 L2141.6,648.7 L2146.5,648.7 L2146.5,724.8 L2151.7,724.8 L2151.7,648.7 L2157.0,648.7 L2157.0,705.8 L2158.2,705.8 L2158.2,724.8 L2161.7,725.4 L2162.7,723.4 L2317.1,723.4 L2317.1,648.7 L2321.8,648.7 L2321.8,724.8 L2326.7,724.8 L2326.7,648.7 L2331.3,648.7 L2331.3,724.8 L2335.7,724.8 L2335.7,648.7 L2340.6,648.7 L2340.6,671.5 L2341.8,671.5 L2341.8,724.8 L2345.8,724.8 L2345.8,648.7 L2351.1,648.7 L2351.1,724.8 L2354.6,725.4 L2355.6,723.4 L2500.0,723.4" fill="none" stroke="#58a8f0" stroke-width="1.7" stroke-linejoin="miter"/>
<line x1="2025.8" y1="718" x2="2025.8" y2="735" stroke="#58a8f0" stroke-width="1.5"/>
<path d="M180.0,825.0 L192.0,825.0 L192.0,761.5 L197.0,761.5 L197.0,825.8 L202.2,825.8 L202.2,761.5 L207.1,761.5 L207.1,825.8 L211.8,825.8 L211.8,761.5 L217.0,761.5 L217.0,816.2 L218.2,816.2 L218.2,825.8 L222.6,825.8 L222.6,761.5 L228.2,761.5 L228.2,825.8 L231.7,826.5 L232.7,825.0 L387.1,825.0 L387.1,761.5 L392.1,761.5 L392.1,825.8 L397.3,825.8 L397.3,761.5 L402.2,761.5 L402.2,780.8 L403.4,780.8 L403.4,825.8 L406.8,825.8 L406.8,761.5 L412.0,761.5 L412.0,825.8 L417.6,825.8 L417.6,761.5 L423.2,761.5 L423.2,825.8 L426.7,826.5 L427.7,825.0 L570.6,825.0 L570.6,761.5 L575.5,761.5 L575.5,825.8 L580.6,825.8 L580.6,761.5 L585.4,761.5 L585.4,825.8 L590.1,825.8 L590.1,761.5 L595.2,761.5 L595.2,825.8 L600.7,825.8 L600.7,761.5 L606.2,761.5 L606.2,825.8 L609.7,826.5 L610.7,825.0 L764.6,825.0 L764.6,761.5 L769.5,761.5 L769.5,825.8 L774.7,825.8 L774.7,761.5 L779.5,761.5 L779.5,825.8 L784.2,825.8 L784.2,761.5 L789.3,761.5 L789.3,825.8 L794.9,825.8 L794.9,761.5 L800.4,761.5 L800.4,825.8 L803.9,826.5 L804.9,825.0 L958.4,825.0 L958.4,761.5 L963.4,761.5 L963.4,825.8 L968.6,825.8 L968.6,761.5 L973.4,761.5 L973.4,825.8 L978.1,825.8 L978.1,761.5 L983.3,761.5 L983.3,825.8 L988.8,825.8 L988.8,761.5 L994.4,761.5 L994.4,825.8 L997.9,826.5 L998.9,825.0 L1152.4,825.0 L1152.4,761.5 L1157.4,761.5 L1157.4,825.8 L1162.6,825.8 L1162.6,761.5 L1167.4,761.5 L1167.4,825.8 L1172.1,825.8 L1172.1,761.5 L1177.3,761.5 L1177.3,825.8 L1182.8,825.8 L1182.8,761.5 L1188.4,761.5 L1188.4,825.8 L1191.9,826.5 L1192.9,825.0 L1274.0,825.0 L1274.0,747.5 L1275.5,748.3 L2025.3,748.3 L2025.3,825.3 L2025.3,825.0 L2123.0,825.0 L2123.0,761.5 L2127.7,761.5 L2127.7,825.8 L2132.6,825.8 L2132.6,761.5 L2137.2,761.5 L2137.2,825.8 L2141.6,825.8 L2141.6,761.5 L2146.5,761.5 L2146.5,825.8 L2151.7,825.8 L2151.7,761.5 L2157.0,761.5 L2157.0,809.7 L2158.2,809.7 L2158.2,825.8 L2161.7,826.5 L2162.7,825.0 L2317.1,825.0 L2317.1,761.5 L2321.8,761.5 L2321.8,825.8 L2326.7,825.8 L2326.7,761.5 L2331.3,761.5 L2331.3,825.8 L2335.7,825.8 L2335.7,761.5 L2340.6,761.5 L2340.6,780.8 L2341.8,780.8 L2341.8,825.8 L2345.8,825.8 L2345.8,761.5 L2351.1,761.5 L2351.1,825.8 L2354.6,826.5 L2355.6,825.0 L2500.0,825.0" fill="none" stroke="#0a0d10" stroke-opacity="0.55" stroke-width="3.9000000000000004" stroke-linejoin="miter"/><path d="M180.0,825.0 L192.0,825.0 L192.0,761.5 L197.0,761.5 L197.0,825.8 L202.2,825.8 L202.2,761.5 L207.1,761.5 L207.1,825.8 L211.8,825.8 L211.8,761.5 L217.0,761.5 L217.0,816.2 L218.2,816.2 L218.2,825.8 L222.6,825.8 L222.6,761.5 L228.2,761.5 L228.2,825.8 L231.7,826.5 L232.7,825.0 L387.1,825.0 L387.1,761.5 L392.1,761.5 L392.1,825.8 L397.3,825.8 L397.3,761.5 L402.2,761.5 L402.2,780.8 L403.4,780.8 L403.4,825.8 L406.8,825.8 L406.8,761.5 L412.0,761.5 L412.0,825.8 L417.6,825.8 L417.6,761.5 L423.2,761.5 L423.2,825.8 L426.7,826.5 L427.7,825.0 L570.6,825.0 L570.6,761.5 L575.5,761.5 L575.5,825.8 L580.6,825.8 L580.6,761.5 L585.4,761.5 L585.4,825.8 L590.1,825.8 L590.1,761.5 L595.2,761.5 L595.2,825.8 L600.7,825.8 L600.7,761.5 L606.2,761.5 L606.2,825.8 L609.7,826.5 L610.7,825.0 L764.6,825.0 L764.6,761.5 L769.5,761.5 L769.5,825.8 L774.7,825.8 L774.7,761.5 L779.5,761.5 L779.5,825.8 L784.2,825.8 L784.2,761.5 L789.3,761.5 L789.3,825.8 L794.9,825.8 L794.9,761.5 L800.4,761.5 L800.4,825.8 L803.9,826.5 L804.9,825.0 L958.4,825.0 L958.4,761.5 L963.4,761.5 L963.4,825.8 L968.6,825.8 L968.6,761.5 L973.4,761.5 L973.4,825.8 L978.1,825.8 L978.1,761.5 L983.3,761.5 L983.3,825.8 L988.8,825.8 L988.8,761.5 L994.4,761.5 L994.4,825.8 L997.9,826.5 L998.9,825.0 L1152.4,825.0 L1152.4,761.5 L1157.4,761.5 L1157.4,825.8 L1162.6,825.8 L1162.6,761.5 L1167.4,761.5 L1167.4,825.8 L1172.1,825.8 L1172.1,761.5 L1177.3,761.5 L1177.3,825.8 L1182.8,825.8 L1182.8,761.5 L1188.4,761.5 L1188.4,825.8 L1191.9,826.5 L1192.9,825.0 L1274.0,825.0 L1274.0,747.5 L1275.5,748.3 L2025.3,748.3 L2025.3,825.3 L2025.3,825.0 L2123.0,825.0 L2123.0,761.5 L2127.7,761.5 L2127.7,825.8 L2132.6,825.8 L2132.6,761.5 L2137.2,761.5 L2137.2,825.8 L2141.6,825.8 L2141.6,761.5 L2146.5,761.5 L2146.5,825.8 L2151.7,825.8 L2151.7,761.5 L2157.0,761.5 L2157.0,809.7 L2158.2,809.7 L2158.2,825.8 L2161.7,826.5 L2162.7,825.0 L2317.1,825.0 L2317.1,761.5 L2321.8,761.5 L2321.8,825.8 L2326.7,825.8 L2326.7,761.5 L2331.3,761.5 L2331.3,825.8 L2335.7,825.8 L2335.7,761.5 L2340.6,761.5 L2340.6,780.8 L2341.8,780.8 L2341.8,825.8 L2345.8,825.8 L2345.8,761.5 L2351.1,761.5 L2351.1,825.8 L2354.6,826.5 L2355.6,825.0 L2500.0,825.0" fill="none" stroke="#ad8cf0" stroke-width="1.7" stroke-linejoin="miter"/>
<line x1="2025.3" y1="748" x2="2025.3" y2="825.5" stroke="#ad8cf0" stroke-width="3"/>
<rect x="185" y="40.5" width="9" height="13" rx="3" fill="#000" fill-opacity="0.2"/><text x="186" y="50.24" font-size="9" font-weight="bold" fill="#f2f2f2">H</text>
<rect x="185" y="122.5" width="9" height="13" rx="3" fill="#000" fill-opacity="0.2"/><text x="186" y="132.24" font-size="9" font-weight="bold" fill="#f2f2f2">L</text>
<rect x="185" y="146.0" width="17" height="13" rx="3" fill="#000" fill-opacity="0.2"/><text x="186" y="155.96" font-size="9.6" font-weight="bold" fill="#f2f2f2">5 V</text>
<rect x="185" y="220.0" width="17" height="13" rx="3" fill="#000" fill-opacity="0.2"/><text x="186" y="229.96" font-size="9.6" font-weight="bold" fill="#f2f2f2">0 V</text>
<rect x="185" y="273.0" width="17" height="13" rx="3" fill="#000" fill-opacity="0.45"/><text x="186" y="282.96" font-size="9.6" font-weight="bold" fill="#f2f2f2">2 V</text>
<rect x="185" y="320.0" width="17" height="13" rx="3" fill="#000" fill-opacity="0.45"/><text x="186" y="329.96" font-size="9.6" font-weight="bold" fill="#f2f2f2">0 V</text>
<rect x="185" y="350.0" width="17" height="13" rx="3" fill="#000" fill-opacity="0.2"/><text x="186" y="359.96" font-size="9.6" font-weight="bold" fill="#f2f2f2">5 V</text>
<rect x="185" y="420.0" width="17" height="13" rx="3" fill="#000" fill-opacity="0.2"/><text x="186" y="429.96" font-size="9.6" font-weight="bold" fill="#f2f2f2">0 V</text>
<rect x="185" y="472.0" width="17" height="13" rx="3" fill="#000" fill-opacity="0.2"/><text x="186" y="481.96" font-size="9.6" font-weight="bold" fill="#f2f2f2">2 V</text>
<rect x="185" y="518.0" width="17" height="13" rx="3" fill="#000" fill-opacity="0.2"/><text x="186" y="527.96" font-size="9.6" font-weight="bold" fill="#f2f2f2">0 V</text>
<rect x="185" y="571.0" width="17" height="13" rx="3" fill="#000" fill-opacity="0.2"/><text x="186" y="580.96" font-size="9.6" font-weight="bold" fill="#f2f2f2">2 V</text>
<rect x="185" y="618.0" width="17" height="13" rx="3" fill="#000" fill-opacity="0.2"/><text x="186" y="627.96" font-size="9.6" font-weight="bold" fill="#f2f2f2">0 V</text>
<rect x="185" y="663.0" width="17" height="13" rx="3" fill="#000" fill-opacity="0.2"/><text x="186" y="672.96" font-size="9.6" font-weight="bold" fill="#f2f2f2">2 V</text>
<rect x="185" y="719.0" width="17" height="13" rx="3" fill="#000" fill-opacity="0.2"/><text x="186" y="728.96" font-size="9.6" font-weight="bold" fill="#f2f2f2">0 V</text>
<rect x="185" y="772.0" width="17" height="13" rx="3" fill="#000" fill-opacity="0.2"/><text x="186" y="781.96" font-size="9.6" font-weight="bold" fill="#f2f2f2">2 V</text>
<rect x="185" y="820.0" width="17" height="13" rx="3" fill="#000" fill-opacity="0.2"/><text x="186" y="829.96" font-size="9.6" font-weight="bold" fill="#f2f2f2">0 V</text>
<rect x="2461.5" y="159.5" width="35" height="35" rx="3" fill="#141414" stroke="#55565c" stroke-width="1"/>
<line x1="2474.0" y1="171.5" x2="2484.0" y2="171.5" stroke="#bbb" stroke-width="1"/>
<line x1="2474.0" y1="182.5" x2="2484.0" y2="182.5" stroke="#bbb" stroke-width="1"/>
<path d="M2476.2,176.3 L2479.0,172.8 L2481.8,176.3 Z M2476.2,177.7 L2479.0,181.2 L2481.8,177.7 Z" fill="#9a9a9a"/>
<rect x="2478.4" y="176.0" width="1.2" height="2" fill="#777"/>
<rect x="2461.5" y="259.5" width="35" height="35" rx="3" fill="#141414" stroke="#55565c" stroke-width="1"/>
<line x1="2474.0" y1="271.5" x2="2484.0" y2="271.5" stroke="#bbb" stroke-width="1"/>
<line x1="2474.0" y1="282.5" x2="2484.0" y2="282.5" stroke="#bbb" stroke-width="1"/>
<path d="M2476.2,276.3 L2479.0,272.8 L2481.8,276.3 Z M2476.2,277.7 L2479.0,281.2 L2481.8,277.7 Z" fill="#9a9a9a"/>
<rect x="2478.4" y="276.0" width="1.2" height="2" fill="#777"/>
<rect x="2461.5" y="359.5" width="35" height="35" rx="3" fill="#141414" stroke="#55565c" stroke-width="1"/>
<line x1="2474.0" y1="371.5" x2="2484.0" y2="371.5" stroke="#bbb" stroke-width="1"/>
<line x1="2474.0" y1="382.5" x2="2484.0" y2="382.5" stroke="#bbb" stroke-width="1"/>
<path d="M2476.2,376.3 L2479.0,372.8 L2481.8,376.3 Z M2476.2,377.7 L2479.0,381.2 L2481.8,377.7 Z" fill="#9a9a9a"/>
<rect x="2478.4" y="376.0" width="1.2" height="2" fill="#777"/>
<rect x="2461.5" y="459.5" width="35" height="35" rx="3" fill="#141414" stroke="#55565c" stroke-width="1"/>
<line x1="2474.0" y1="471.5" x2="2484.0" y2="471.5" stroke="#bbb" stroke-width="1"/>
<line x1="2474.0" y1="482.5" x2="2484.0" y2="482.5" stroke="#bbb" stroke-width="1"/>
<path d="M2476.2,476.3 L2479.0,472.8 L2481.8,476.3 Z M2476.2,477.7 L2479.0,481.2 L2481.8,477.7 Z" fill="#9a9a9a"/>
<rect x="2478.4" y="476.0" width="1.2" height="2" fill="#777"/>
<rect x="2461.5" y="559.5" width="35" height="35" rx="3" fill="#141414" stroke="#55565c" stroke-width="1"/>
<line x1="2474.0" y1="571.5" x2="2484.0" y2="571.5" stroke="#bbb" stroke-width="1"/>
<line x1="2474.0" y1="582.5" x2="2484.0" y2="582.5" stroke="#bbb" stroke-width="1"/>
<path d="M2476.2,576.3 L2479.0,572.8 L2481.8,576.3 Z M2476.2,577.7 L2479.0,581.2 L2481.8,577.7 Z" fill="#9a9a9a"/>
<rect x="2478.4" y="576.0" width="1.2" height="2" fill="#777"/>
<rect x="2461.5" y="659.5" width="35" height="35" rx="3" fill="#141414" stroke="#55565c" stroke-width="1"/>
<line x1="2474.0" y1="671.5" x2="2484.0" y2="671.5" stroke="#bbb" stroke-width="1"/>
<line x1="2474.0" y1="682.5" x2="2484.0" y2="682.5" stroke="#bbb" stroke-width="1"/>
<path d="M2476.2,676.3 L2479.0,672.8 L2481.8,676.3 Z M2476.2,677.7 L2479.0,681.2 L2481.8,677.7 Z" fill="#9a9a9a"/>
<rect x="2478.4" y="676.0" width="1.2" height="2" fill="#777"/>
<rect x="2461.5" y="759.5" width="35" height="35" rx="3" fill="#141414" stroke="#55565c" stroke-width="1"/>
<line x1="2474.0" y1="771.5" x2="2484.0" y2="771.5" stroke="#bbb" stroke-width="1"/>
<line x1="2474.0" y1="782.5" x2="2484.0" y2="782.5" stroke="#bbb" stroke-width="1"/>
<path d="M2476.2,776.3 L2479.0,772.8 L2481.8,776.3 Z M2476.2,777.7 L2479.0,781.2 L2481.8,777.7 Z" fill="#9a9a9a"/>
<rect x="2478.4" y="776.0" width="1.2" height="2" fill="#777"/>
<rect x="1075" y="-26" width="380" height="52" fill="url(#tsh)"/>
<text x="201.7" y="32" font-size="11" font-weight="bold" fill="#ececec" stroke="#000" stroke-opacity="0.4" stroke-width="2" paint-order="stroke">+6 s</text>
<text x="251.9" y="32" font-size="11" font-weight="bold" fill="#ececec" stroke="#000" stroke-opacity="0.4" stroke-width="2" paint-order="stroke">+7 s</text>
<text x="302.0" y="32" font-size="11" font-weight="bold" fill="#ececec" stroke="#000" stroke-opacity="0.4" stroke-width="2" paint-order="stroke">+8 s</text>
<text x="352.1" y="32" font-size="11" font-weight="bold" fill="#ececec" stroke="#000" stroke-opacity="0.4" stroke-width="2" paint-order="stroke">+9 s</text>
<text x="405.2" y="16" font-size="11" font-weight="bold" fill="#ececec" stroke="#000" stroke-opacity="0.4" stroke-width="2" paint-order="stroke">30 s</text>
<text x="452.3" y="32" font-size="11" font-weight="bold" fill="#ececec" stroke="#000" stroke-opacity="0.4" stroke-width="2" paint-order="stroke">+1 s</text>
<text x="502.4" y="32" font-size="11" font-weight="bold" fill="#ececec" stroke="#000" stroke-opacity="0.4" stroke-width="2" paint-order="stroke">+2 s</text>
<text x="552.5" y="32" font-size="11" font-weight="bold" fill="#ececec" stroke="#000" stroke-opacity="0.4" stroke-width="2" paint-order="stroke">+3 s</text>
<text x="602.7" y="32" font-size="11" font-weight="bold" fill="#ececec" stroke="#000" stroke-opacity="0.4" stroke-width="2" paint-order="stroke">+4 s</text>
<text x="652.8" y="32" font-size="11" font-weight="bold" fill="#ececec" stroke="#000" stroke-opacity="0.4" stroke-width="2" paint-order="stroke">+5 s</text>
<text x="702.9" y="32" font-size="11" font-weight="bold" fill="#ececec" stroke="#000" stroke-opacity="0.4" stroke-width="2" paint-order="stroke">+6 s</text>
<text x="753.0" y="32" font-size="11" font-weight="bold" fill="#ececec" stroke="#000" stroke-opacity="0.4" stroke-width="2" paint-order="stroke">+7 s</text>
<text x="803.1" y="32" font-size="11" font-weight="bold" fill="#ececec" stroke="#000" stroke-opacity="0.4" stroke-width="2" paint-order="stroke">+8 s</text>
<text x="853.2" y="32" font-size="11" font-weight="bold" fill="#ececec" stroke="#000" stroke-opacity="0.4" stroke-width="2" paint-order="stroke">+9 s</text>
<text x="906.3" y="16" font-size="11" font-weight="bold" fill="#ececec" stroke="#000" stroke-opacity="0.4" stroke-width="2" paint-order="stroke">40 s</text>
<text x="953.5" y="32" font-size="11" font-weight="bold" fill="#ececec" stroke="#000" stroke-opacity="0.4" stroke-width="2" paint-order="stroke">+1 s</text>
<text x="1003.6" y="32" font-size="11" font-weight="bold" fill="#ececec" stroke="#000" stroke-opacity="0.4" stroke-width="2" paint-order="stroke">+2 s</text>
<text x="1053.7" y="32" font-size="11" font-weight="bold" fill="#ececec" stroke="#000" stroke-opacity="0.4" stroke-width="2" paint-order="stroke">+3 s</text>
<text x="1103.8" y="32" font-size="11" font-weight="bold" fill="#ececec" stroke="#000" stroke-opacity="0.4" stroke-width="2" paint-order="stroke">+4 s</text>
<text x="1153.9" y="32" font-size="11" font-weight="bold" fill="#ececec" stroke="#000" stroke-opacity="0.4" stroke-width="2" paint-order="stroke">+5 s</text>
<text x="1204.0" y="32" font-size="11" font-weight="bold" fill="#ececec" stroke="#000" stroke-opacity="0.4" stroke-width="2" paint-order="stroke">+6 s</text>
<text x="1254.1" y="32" font-size="11" font-weight="bold" fill="#ececec" stroke="#000" stroke-opacity="0.4" stroke-width="2" paint-order="stroke">+7 s</text>
<text x="1304.3" y="32" font-size="11" font-weight="bold" fill="#ececec" stroke="#000" stroke-opacity="0.4" stroke-width="2" paint-order="stroke">+8 s</text>
<text x="1354.4" y="32" font-size="11" font-weight="bold" fill="#ececec" stroke="#000" stroke-opacity="0.4" stroke-width="2" paint-order="stroke">+9 s</text>
<text x="1407.5" y="16" font-size="11" font-weight="bold" fill="#c4c4c4" stroke="#000" stroke-opacity="0.4" stroke-width="2" paint-order="stroke">50 s</text>
<text x="1454.6" y="32" font-size="11" font-weight="bold" fill="#ececec" stroke="#000" stroke-opacity="0.4" stroke-width="2" paint-order="stroke">+1 s</text>
<text x="1504.7" y="32" font-size="11" font-weight="bold" fill="#ececec" stroke="#000" stroke-opacity="0.4" stroke-width="2" paint-order="stroke">+2 s</text>
<text x="1554.8" y="32" font-size="11" font-weight="bold" fill="#ececec" stroke="#000" stroke-opacity="0.4" stroke-width="2" paint-order="stroke">+3 s</text>
<text x="1605.0" y="32" font-size="11" font-weight="bold" fill="#ececec" stroke="#000" stroke-opacity="0.4" stroke-width="2" paint-order="stroke">+4 s</text>
<text x="1655.1" y="32" font-size="11" font-weight="bold" fill="#ececec" stroke="#000" stroke-opacity="0.4" stroke-width="2" paint-order="stroke">+5 s</text>
<text x="1705.2" y="32" font-size="11" font-weight="bold" fill="#ececec" stroke="#000" stroke-opacity="0.4" stroke-width="2" paint-order="stroke">+6 s</text>
<text x="1755.3" y="32" font-size="11" font-weight="bold" fill="#ececec" stroke="#000" stroke-opacity="0.4" stroke-width="2" paint-order="stroke">+7 s</text>
<text x="1805.4" y="32" font-size="11" font-weight="bold" fill="#ececec" stroke="#000" stroke-opacity="0.4" stroke-width="2" paint-order="stroke">+8 s</text>
<text x="1855.5" y="32" font-size="11" font-weight="bold" fill="#ececec" stroke="#000" stroke-opacity="0.4" stroke-width="2" paint-order="stroke">+9 s</text>
<text x="1908.6" y="16" font-size="11" font-weight="bold" fill="#ececec" stroke="#000" stroke-opacity="0.4" stroke-width="2" paint-order="stroke">60 s</text>
<text x="1955.8" y="32" font-size="11" font-weight="bold" fill="#ececec" stroke="#000" stroke-opacity="0.4" stroke-width="2" paint-order="stroke">+1 s</text>
<text x="2005.9" y="32" font-size="11" font-weight="bold" fill="#ececec" stroke="#000" stroke-opacity="0.4" stroke-width="2" paint-order="stroke">+2 s</text>
<text x="2056.0" y="32" font-size="11" font-weight="bold" fill="#ececec" stroke="#000" stroke-opacity="0.4" stroke-width="2" paint-order="stroke">+3 s</text>
<text x="2106.1" y="32" font-size="11" font-weight="bold" fill="#ececec" stroke="#000" stroke-opacity="0.4" stroke-width="2" paint-order="stroke">+4 s</text>
<text x="2156.2" y="32" font-size="11" font-weight="bold" fill="#ececec" stroke="#000" stroke-opacity="0.4" stroke-width="2" paint-order="stroke">+5 s</text>
<text x="2206.3" y="32" font-size="11" font-weight="bold" fill="#ececec" stroke="#000" stroke-opacity="0.4" stroke-width="2" paint-order="stroke">+6 s</text>
<text x="2256.4" y="32" font-size="11" font-weight="bold" fill="#ececec" stroke="#000" stroke-opacity="0.4" stroke-width="2" paint-order="stroke">+7 s</text>
<text x="2306.6" y="32" font-size="11" font-weight="bold" fill="#ececec" stroke="#000" stroke-opacity="0.4" stroke-width="2" paint-order="stroke">+8 s</text>
<text x="2356.7" y="32" font-size="11" font-weight="bold" fill="#ececec" stroke="#000" stroke-opacity="0.4" stroke-width="2" paint-order="stroke">+9 s</text>
<text x="2409.8" y="16" font-size="11" font-weight="bold" fill="#ececec" stroke="#000" stroke-opacity="0.4" stroke-width="2" paint-order="stroke">70 s</text>
<text x="2456.9" y="32" font-size="11" font-weight="bold" fill="#ececec" stroke="#000" stroke-opacity="0.4" stroke-width="2" paint-order="stroke">+1 s</text>
<rect x="180" y="0" width="28" height="38" fill="url(#lsh)"/>
<rect x="0" y="137" width="2500" height="2" fill="#5c5d64"/>
<rect x="0" y="237" width="2500" height="2" fill="#5c5d64"/>
<rect x="0" y="337" width="2500" height="2" fill="#5c5d64"/>
<rect x="0" y="437" width="2500" height="2" fill="#5c5d64"/>
<rect x="0" y="537" width="2500" height="2" fill="#5c5d64"/>
<rect x="0" y="637" width="2500" height="2" fill="#5c5d64"/>
<rect x="0" y="737" width="2500" height="2" fill="#5c5d64"/>
<rect x="0" y="837" width="2500" height="2" fill="#5c5d64"/>
<rect x="0" y="0" width="179" height="840" fill="#1c1c1c"/>
<path d="M68.5,10.5 L79.5,-0.5" stroke="#4a4a4a" stroke-width="1.3" fill="none"/>
<path d="M68.5,0 Q78,5 86,7.8 Q92,9 107.5,-0.3" stroke="#4a4a4a" stroke-width="1.3" fill="none"/>
<rect x="0" y="38" width="180" height="1" fill="#5a5b62"/>
<rect x="179" y="0" width="1" height="840" fill="#5a5b62"/>
<rect x="0" y="39" width="5" height="98" fill="#e6d636"/>
<rect x="0" y="137" width="179" height="2" fill="#5c5d64"/>
<text x="19" y="69" font-size="10" fill="#e6d636">D4</text>
<text x="55" y="68" font-size="13" fill="#e6e6e6">Liquid Detected</text>
<rect x="0" y="139" width="5" height="98" fill="#d8d8d8"/>
<rect x="0" y="237" width="179" height="2" fill="#5c5d64"/>
<text x="19" y="169" font-size="10" fill="#d8d8d8">A0</text>
<text x="55" y="168" font-size="13" fill="#e6e6e6">CC1</text>
<rect x="0" y="239" width="5" height="98" fill="#c9977a"/>
<rect x="0" y="337" width="179" height="2" fill="#5c5d64"/>
<text x="19" y="269" font-size="10" fill="#c9977a">A1</text>
<text x="55" y="268" font-size="13" fill="#e6e6e6">CC2</text>
<rect x="0" y="339" width="5" height="98" fill="#fc6e7e"/>
<rect x="0" y="437" width="179" height="2" fill="#5c5d64"/>
<text x="19" y="369" font-size="10" fill="#fc6e7e">A2</text>
<text x="55" y="368" font-size="13" fill="#e6e6e6">VBUS</text>
<rect x="0" y="439" width="5" height="98" fill="#fbad5a"/>
<rect x="0" y="537" width="179" height="2" fill="#5c5d64"/>
<text x="19" y="469" font-size="10" fill="#fbad5a">A3</text>
<text x="55" y="468" font-size="13" fill="#e6e6e6">PMOS Driver</text>
<rect x="0" y="539" width="5" height="98" fill="#5ac46a"/>
<rect x="0" y="637" width="179" height="2" fill="#5c5d64"/>
<text x="19" y="569" font-size="10" fill="#5ac46a">A5</text>
<text x="55" y="568" font-size="13" fill="#e6e6e6">NMOS Driver</text>
<rect x="0" y="639" width="5" height="98" fill="#56a6f4"/>
<rect x="0" y="737" width="179" height="2" fill="#5c5d64"/>
<text x="19" y="669" font-size="10" fill="#56a6f4">A6</text>
<text x="55" y="668" font-size="13" fill="#e6e6e6">SBU1</text>
<rect x="0" y="739" width="5" height="98" fill="#b08ef5"/>
<rect x="0" y="837" width="179" height="2" fill="#5c5d64"/>
<text x="19" y="769" font-size="10" fill="#b08ef5">A7</text>
<text x="55" y="768" font-size="13" fill="#e6e6e6">SBU2</text>
</svg></body></html>
